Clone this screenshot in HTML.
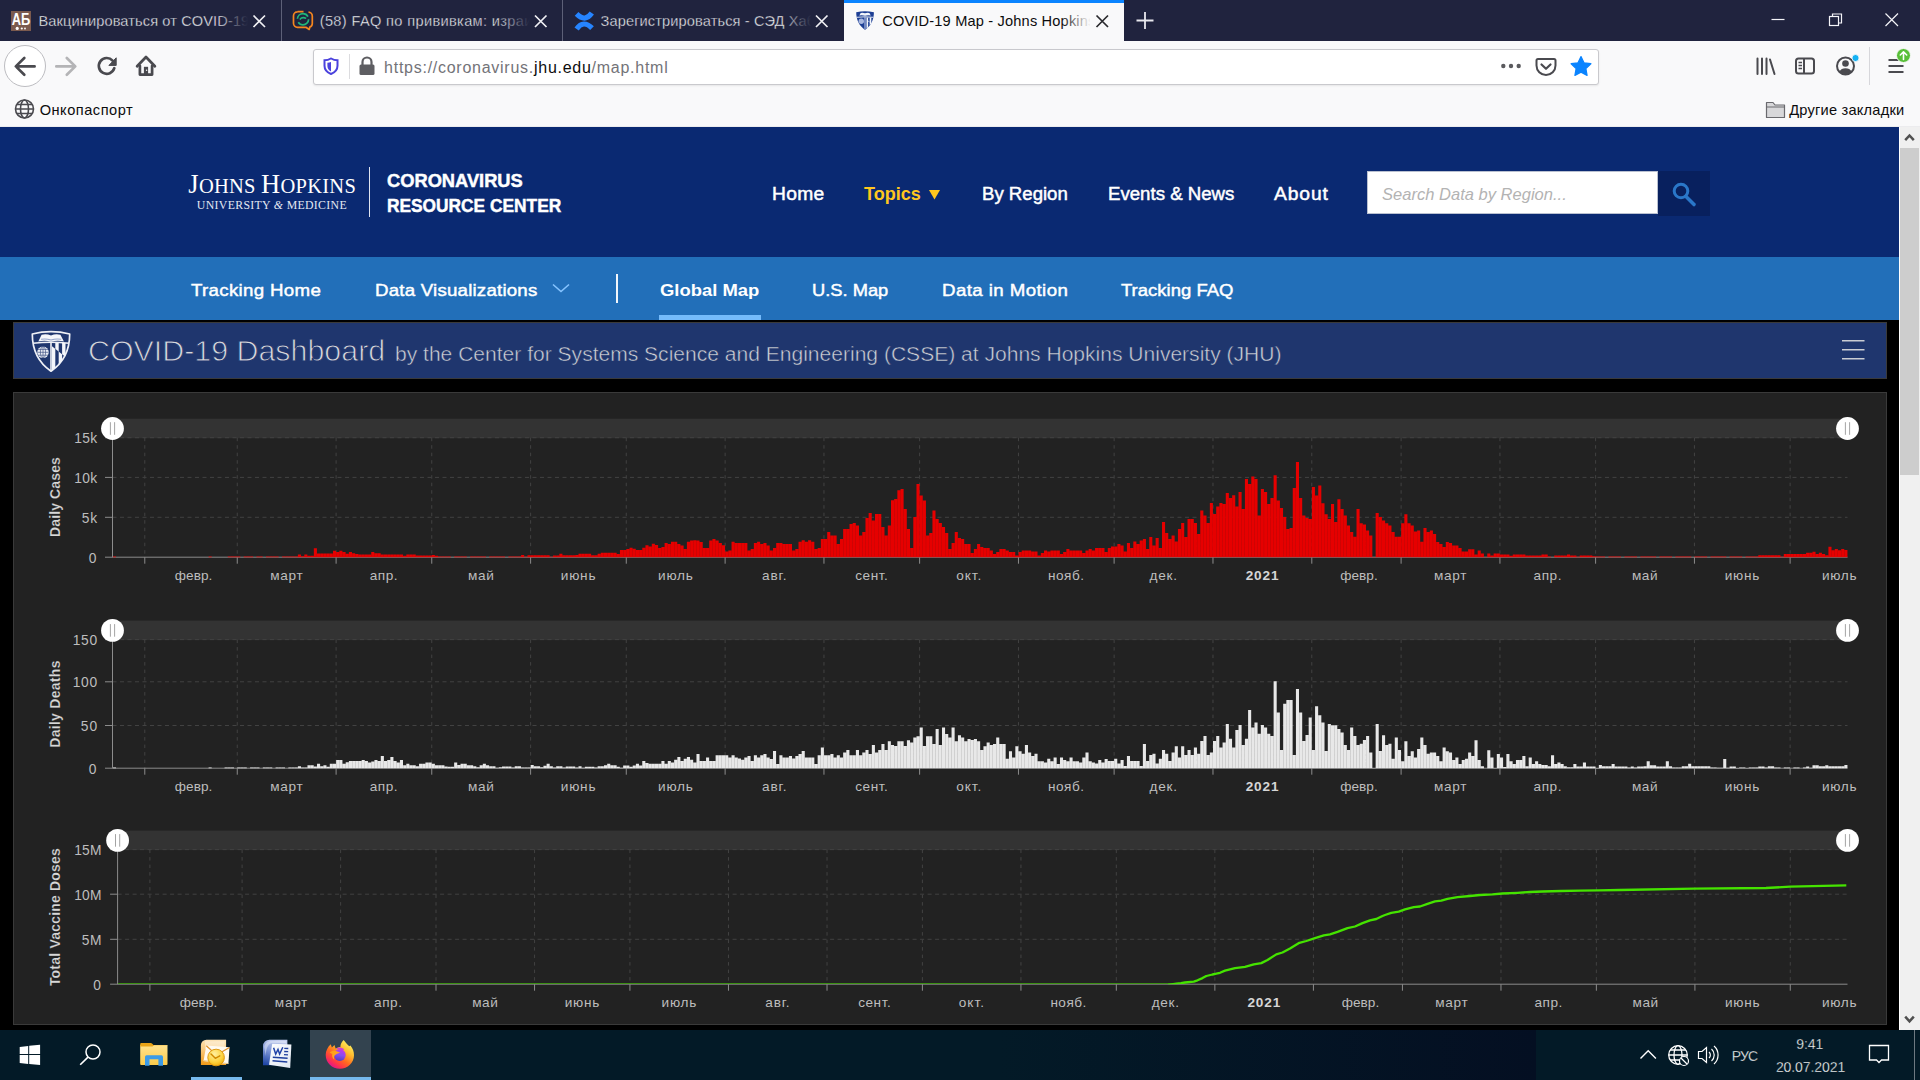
<!DOCTYPE html>
<html lang="ru"><head><meta charset="utf-8"><title>COVID-19 Map - Johns Hopkins Coronavirus Resource Center</title>
<style>
html,body{margin:0;padding:0;background:#000;}
body{width:1920px;height:1080px;overflow:hidden;font-family:"Liberation Sans",sans-serif;}
#root{position:relative;width:1920px;height:1080px;overflow:hidden;background:#000;}
.a{position:absolute;}
.t{position:absolute;white-space:nowrap;}
svg{position:absolute;overflow:visible;}

</style></head>
<body>
<div id="root">

<!-- ===== Browser chrome ===== -->
<div class="a" style="left:0;top:0;width:1920px;height:41px;background:#20233e;"></div>
<!-- tab separators -->
<div class="a" style="left:280.500px;top:0;width:1px;height:41px;background:#5d6078;"></div>
<div class="a" style="left:562px;top:0;width:1px;height:41px;background:#5d6078;"></div>
<!-- active tab -->
<div class="a" style="left:844px;top:0;width:280px;height:41px;background:#f9f9fa;"></div>
<div class="a" style="left:844px;top:0;width:280px;height:3px;background:#0a84ff;"></div>
<!-- tab text fades -->
<div class="a" style="left:218px;top:8px;width:30px;height:26px;z-index:3;background:linear-gradient(90deg,rgba(32,35,62,0),#20233e);"></div>
<div class="a" style="left:500px;top:8px;width:30px;height:26px;z-index:3;background:linear-gradient(90deg,rgba(32,35,62,0),#20233e);"></div>
<div class="a" style="left:782px;top:8px;width:30px;height:26px;z-index:3;background:linear-gradient(90deg,rgba(32,35,62,0),#20233e);"></div>
<div class="a" style="left:1061px;top:8px;width:30px;height:26px;z-index:3;background:linear-gradient(90deg,rgba(249,249,250,0),#f9f9fa);"></div>
<!-- toolbar + bookmarks bg -->
<div class="a" style="left:0;top:41px;width:1920px;height:86px;background:#f9f9fa;"></div>
<div class="a" style="left:0;top:126px;width:1920px;height:1px;background:#ececee;"></div>
<!-- url bar -->
<div class="a" style="left:313px;top:49px;width:1286px;height:35.500px;background:#fff;border:1px solid #c9c9cd;border-radius:3px;box-sizing:border-box;box-shadow:0 1px 2px rgba(0,0,0,.08);"></div>
<div class="a" style="left:349px;top:54px;width:1px;height:25px;background:#dcdcdf;"></div>
<!-- back button -->
<div class="a" style="left:4px;top:45px;width:42px;height:42px;border-radius:50%;background:#fff;border:1px solid #bdbdc1;box-sizing:border-box;"></div>
<svg style="left:0;top:0" width="1920" height="127" viewBox="0 0 1920 127">
  <!-- tab 1 favicon (AB) -->
  <rect x="11" y="11" width="20" height="20" fill="#7b5a4e"/>
  <text x="11.700" y="24.800" font-family="Liberation Sans, sans-serif" font-weight="700" font-size="17" textLength="18.600" lengthAdjust="spacingAndGlyphs" fill="#fff">АБ</text>
  <g fill="#fff"><circle cx="17.200" cy="28.400" r="1.600"/><circle cx="21.800" cy="28.500" r="1.100"/><circle cx="25" cy="28.500" r="0.900"/></g>
  <!-- tab 2 favicon -->
  <g fill="none">
    <path d="M297.500 11.600 h6 M308.500 12.200 a4 4 0 0 1 3.800 4 v7.200 a4 4 0 0 1 -2.500 3.700 l-.600 2.400 -3.300 -2.200 h-8.400 a4 4 0 0 1 -4 -4 v-7.400 a4 4 0 0 1 4 -4" stroke="#f5861f" stroke-width="1.700" stroke-linejoin="round"/>
    <circle cx="303" cy="19.200" r="5.600" stroke="#1fb67a" stroke-width="1.700" stroke-dasharray="14 3.600"/>
    <path d="M299.800 19.400 c1.500 -1.800 4 -2.200 6.400 -1" stroke="#1fb67a" stroke-width="1.500"/>
  </g>
  <!-- tab 3 favicon (confluence) -->
  <g fill="none" stroke="#2684ff" stroke-width="5.200">
    <path d="M576.600 13.900 Q585.200 22.600 591.800 13.100"/>
    <path d="M592 28.200 Q583.400 19.500 576.600 28.900"/>
  </g>
  <!-- active tab favicon (JHU shield) -->
  <g>
    <path d="M856.200 12.300 Q865 10.200 873.900 12.300 C873.900 20 870.700 26 865 30 C859.400 26 856.200 20 856.200 12.300Z" fill="#1d3f94"/>
    <path d="M859.300 15.600 L860.700 12.900 Q863 12.300 865 13.200 Q867 12.300 869.400 12.900 L870.800 15.600 Q868 15 865 15.800 Q862 15 859.300 15.600Z" fill="#f2f5fb"/>
    <path d="M856.800 17.300 Q865 16.300 873.300 17.300" fill="none" stroke="#f2f5fb" stroke-width=".900"/>
    <circle cx="861.300" cy="21.300" r="2.700" fill="#a9b8df"/>
    <path d="M865 17 V29.500" stroke="#c9d3ee" stroke-width="1"/>
    <path d="M866.500 17.600 h1.600 v3 l1.600 1.400 v-4.400 h1.600 v6 l-1.600 1.600 v-2.600 l-1.600 -1.400 v6 l-1.600 1.400z" fill="#f2f5fb"/>
  </g>
  <!-- tab close X's -->
  <g stroke="#f0f0f4" stroke-width="1.700" fill="none" stroke-linecap="butt">
    <path d="M253.500 15.500 l11.500 11.500 M265 15.500 l-11.500 11.500"/>
    <path d="M535 15.500 l11.500 11.500 M546.500 15.500 l-11.500 11.500"/>
    <path d="M816 15.500 l11.500 11.500 M827.500 15.500 l-11.500 11.500"/>
  </g>
  <path d="M1096.500 15.500 l11.500 11.500 M1108 15.500 l-11.500 11.500" stroke="#2a2a2e" stroke-width="1.700" fill="none"/>
  <!-- new tab plus -->
  <path d="M1136.500 20.500 h17 M1145 12 v17" stroke="#e8e8ee" stroke-width="1.800" fill="none"/>
  <!-- window controls -->
  <g stroke="#f4f4f8" stroke-width="1.200" fill="none">
    <path d="M1771.500 19.500 h13"/>
    <rect x="1829.500" y="16.500" width="9" height="9"/>
    <path d="M1832.500 16.500 v-2.500 h9 v9 h-2.500"/>
    <path d="M1885.500 13.500 l12.500 12.500 M1898 13.500 l-12.500 12.500"/>
  </g>
  <!-- back arrow -->
  <path d="M34.600 66.400 h-18.500 M24.300 58 l-8.500 8.400 8.500 8.400" stroke="#4a4a4f" stroke-width="2.700" fill="none" stroke-linecap="round" stroke-linejoin="round"/>
  <!-- forward arrow -->
  <path d="M56.300 66.400 h18.500 M66.800 58 l8.500 8.400 -8.500 8.400" stroke="#b4b4b6" stroke-width="2.700" fill="none" stroke-linecap="round" stroke-linejoin="round"/>
  <!-- reload -->
  <path d="M112.600 60.600 a7.900 7.900 0 1 0 1.700 7.600" stroke="#4a4a4f" stroke-width="2.700" fill="none" stroke-linecap="round"/>
  <path d="M116.200 57.800 v7.600 h-7.300 z" fill="#4a4a4f" stroke="#4a4a4f" stroke-width="1" stroke-linejoin="round"/>
  <!-- home -->
  <g stroke="#4a4a4f" stroke-width="2.700" fill="none" stroke-linejoin="round" stroke-linecap="round">
    <path d="M137.100 66.300 l8.900 -9.300 8.900 9.300"/>
    <path d="M139.900 65.800 v8.800 h12.200 v-8.800"/>
  </g>
  <path d="M143.900 66.800 h4.200 v7.800 h-4.200z" fill="#4a4a4f"/>
  <circle cx="146.600" cy="70.200" r=".700" fill="#f9f9fa"/>
  <!-- tracking shield -->
  <path d="M331 58.500 c2.300 1.300 4.600 1.800 6.500 1.800 v5.500 c0 4 -2.700 6.700 -6.500 8.200 c-3.800 -1.500 -6.500 -4.200 -6.500 -8.200 v-5.500 c1.900 0 4.200 -.5 6.500 -1.800z" fill="none" stroke="#4b42dd" stroke-width="2"/>
  <path d="M331 62 v9.500 c-2.200 -1.100 -3.600 -3 -3.600 -5.500 v-3.200 c1.300 -.1 2.500 -.4 3.600 -.8z" fill="#4b42dd"/>
  <!-- lock -->
  <g>
    <rect x="359.500" y="64.500" width="15" height="10.500" rx="1.500" fill="#5e5e62"/>
    <path d="M362.500 65 v-3 a4.500 4.500 0 0 1 9 0 v3" fill="none" stroke="#5e5e62" stroke-width="2.200"/>
  </g>
  <!-- ... page actions -->
  <g fill="#5a5a5e"><circle cx="1503.300" cy="66" r="2.200"/><circle cx="1511" cy="66" r="2.200"/><circle cx="1518.700" cy="66" r="2.200"/></g>
  <!-- pocket -->
  <path d="M1538 59 h16 a1.500 1.500 0 0 1 1.500 1.500 v5 a9.500 9.500 0 0 1 -19 0 v-5 a1.500 1.500 0 0 1 1.500 -1.500z" fill="none" stroke="#4a4a4f" stroke-width="2"/>
  <path d="M1541.500 64.500 l4.500 4.300 4.500 -4.300" fill="none" stroke="#4a4a4f" stroke-width="2.200" stroke-linecap="round" stroke-linejoin="round"/>
  <!-- star -->
  <path d="M1581 56.500 l3 6.300 6.900 .9 -5 4.800 1.200 6.900 -6.100 -3.300 -6.100 3.300 1.200 -6.900 -5 -4.800 6.900 -.9z" fill="#0a84ff" stroke="#0a84ff" stroke-width="1.200" stroke-linejoin="round"/>
  <!-- library -->
  <g stroke="#4a4a4f" stroke-width="2" fill="none" stroke-linecap="round">
    <path d="M1757.500 58.500 v15.500 M1762 58.500 v15.500 M1766.500 58.500 v15.500 M1770 59.500 l4.500 14.500"/>
  </g>
  <!-- sidebar -->
  <rect x="1796" y="58.500" width="18" height="15" rx="2.500" fill="none" stroke="#4a4a4f" stroke-width="2"/>
  <path d="M1804 58.500 v15" stroke="#4a4a4f" stroke-width="2"/>
  <path d="M1798.500 62.500 h3.500 M1798.500 65.500 h3.500 M1798.500 68.500 h3.500" stroke="#4a4a4f" stroke-width="1.300"/>
  <!-- account -->
  <circle cx="1845.500" cy="66" r="8.500" fill="none" stroke="#4a4a4f" stroke-width="2"/>
  <circle cx="1845.500" cy="63.500" r="3.300" fill="#4a4a4f"/>
  <path d="M1839.500 71.500 c1.500 -4.500 10.500 -4.500 12 0 c-3 3.500 -9 3.500 -12 0z" fill="#4a4a4f"/>
  <circle cx="1855.500" cy="58" r="3.500" fill="#14b1f3" stroke="#f9f9fa" stroke-width=".800"/>
  <!-- separator -->
  <path d="M1869.500 47 v38" stroke="#d7d7db" stroke-width="1"/>
  <!-- hamburger -->
  <path d="M1888.500 60 h15 M1888.500 66 h15 M1888.500 72 h15" stroke="#4a4a4f" stroke-width="2.200" fill="none"/>
  <circle cx="1903.500" cy="55.500" r="7" fill="#58bf38" stroke="#f9f9fa" stroke-width="1"/>
  <path d="M1903.500 59.500 v-7.500 M1900.300 55 l3.200 -3.200 3.200 3.200" stroke="#fff" stroke-width="1.600" fill="none" stroke-linecap="round" stroke-linejoin="round"/>
  <!-- bookmark globe -->
  <g stroke="#4a4a4f" stroke-width="1.600" fill="none">
    <circle cx="24.500" cy="109" r="9"/>
    <ellipse cx="24.500" cy="109" rx="4" ry="9"/>
    <path d="M15.500 109 h18 M17 104.500 h15 M17 113.500 h15"/>
  </g>
  <!-- bookmark folder -->
  <path d="M1766.500 102.500 h6.500 l2 2.500 h9.500 v12.500 h-18z" fill="#d8d8da" stroke="#6a6a6e" stroke-width="1.200" stroke-linejoin="round"/>
  <path d="M1766.500 107 h18" stroke="#6a6a6e" stroke-width="1"/>
</svg>


<!-- ===== Page ===== -->
<div class="a" style="left:0;top:127px;width:1899px;height:130px;background:#0a2972;"></div>
<div class="a" style="left:0;top:257px;width:1899px;height:63px;background:#226fb9;"></div>
<div class="a" style="left:0;top:320px;width:1899px;height:710px;background:#000;"></div>
<!-- logo divider -->
<div class="a" style="left:368.500px;top:167px;width:1.500px;height:50px;background:#dfe4f0;"></div>
<!-- search -->
<div class="a" style="left:1367px;top:171px;width:291px;height:43px;background:#fff;border:1px solid #b9c0d0;box-sizing:border-box;"></div>
<div class="a" style="left:1658px;top:171px;width:52px;height:45px;background:#08205e;"></div>
<svg style="left:1658px;top:171px" width="52" height="45" viewBox="0 0 52 45">
  <circle cx="23" cy="20" r="6.800" fill="none" stroke="#2a77c9" stroke-width="3"/>
  <path d="M28 25.500 l8 8" stroke="#2a77c9" stroke-width="3.600" stroke-linecap="round"/>
</svg>
<!-- topics triangle -->
<svg style="left:928px;top:188px" width="14" height="14" viewBox="0 0 14 14"><path d="M1 2 h11 l-5.500 9.500z" fill="#ffc61e"/></svg>
<!-- subnav chevron, divider, underline -->
<svg style="left:551px;top:282px" width="20" height="12" viewBox="0 0 20 12"><path d="M2 2.500 l8 7 8 -7" fill="none" stroke="#86c4ff" stroke-width="1.600"/></svg>
<div class="a" style="left:616px;top:274px;width:2px;height:29px;background:#f2f6fb;"></div>
<div class="a" style="left:659px;top:315px;width:102px;height:5px;background:#74bbfb;"></div>
<!-- dashboard header -->
<div class="a" style="left:13px;top:322px;width:1874px;height:57px;background:#1f366e;border:1px solid #3a3a3a;box-sizing:border-box;"></div>
<svg style="left:30px;top:329px" width="44" height="46" viewBox="0 0 44 46">
  <defs>
    <clipPath id="shr"><path d="M22 14.100 H38.900 C37.800 24.500 31.500 35 22 41.300Z"/></clipPath>
    <clipPath id="dup"><path d="M22 10 H42 V33 L22 17.200Z"/></clipPath>
    <clipPath id="ddn"><path d="M22 17.200 L42 33 V44 H22Z"/></clipPath>
  </defs>
  <path d="M2.300 5 Q21 0.300 39.700 5 C39.700 20.500 33 34 21 42.200 C9 34 2.300 20.500 2.300 5Z" fill="#1f366e" stroke="#eef0f6" stroke-width="1.700" stroke-linejoin="round"/>
  <path d="M3 14.200 Q21 12.200 39 14.200" fill="none" stroke="#eef0f6" stroke-width="1.500"/>
  <path d="M8.300 12.400 L11.600 5.700 Q16.500 4.500 21 6.400 Q25.500 4.500 30.400 5.700 L33.900 12.400 Q27 11 21 12.700 Q15 11 8.300 12.400Z" fill="#f4f6fa"/>
  <path d="M11 10.300 Q16 9.300 21 11 Q26 9.300 31.200 10.300" fill="none" stroke="#93a2c8" stroke-width="1.100"/>
  <circle cx="13" cy="23.300" r="5.800" fill="#e9ecf4"/>
  <g fill="none" stroke="#1f366e" stroke-width=".550"><ellipse cx="13" cy="23.300" rx="2.600" ry="5.800"/><path d="M13 17.500v11.600M7.200 23.300h11.600M8 20.400h10M8 26.200h10"/></g>
  <g clip-path="url(#shr)">
    <g clip-path="url(#dup)" fill="#f4f6fa"><rect x="25.300" y="12" width="3.400" height="32"/><rect x="32.100" y="12" width="3.400" height="32"/></g>
    <g clip-path="url(#ddn)" fill="#f4f6fa"><rect x="21.900" y="12" width="3.400" height="32"/><rect x="28.700" y="12" width="3.400" height="32"/><rect x="35.500" y="12" width="3.400" height="32"/></g>
  </g>
  <path d="M21 14 V41.600" stroke="#eef0f6" stroke-width="1.600"/>
</svg>
<svg style="left:1840px;top:336px" width="28" height="28" viewBox="0 0 28 28"><path d="M2 4.800 h22.500 M2 13.800 h22.500 M2 22.800 h22.500" stroke="#c9ccd3" stroke-width="1.500"/></svg>
<!-- chart panel -->
<div class="a" style="left:13px;top:392px;width:1874px;height:633px;background:#222;border:1px solid #3a3a3a;box-sizing:border-box;"></div>
<!-- page scrollbar -->
<div class="a" style="left:1899px;top:127px;width:21px;height:903px;background:#f0f0f0;"></div>
<div class="a" style="left:1899px;top:127px;width:1px;height:903px;background:#fff;"></div>
<div class="a" style="left:1900px;top:148px;width:19px;height:327px;background:#cdcdcd;"></div>
<svg style="left:1899px;top:127px" width="21" height="903" viewBox="0 0 21 903">
  <path d="M6.200 13.200 l4.300 -4.700 4.300 4.700" fill="none" stroke="#505050" stroke-width="2.500"/>
  <path d="M6.200 889.600 l4.300 4.700 4.300 -4.700" fill="none" stroke="#505050" stroke-width="2.500"/>
</svg>

<!-- ===== Charts ===== -->
<svg style="left:0;top:0" width="1920" height="1080" viewBox="0 0 1920 1080">
<rect x="112.5" y="418.7" width="1735" height="19.5" fill="#333"/>
<path d="M112.5 437.7H1847.5M112.5 477.4H1847.5M112.5 517.3H1847.5" stroke="#424242" stroke-width="1" stroke-dasharray="4 3.5" fill="none"/>
<path d="M144.79 437.7V557.2M237.26 437.7V557.2M336.1 437.7V557.2M431.76 437.7V557.2M530.61 437.7V557.2M626.27 437.7V557.2M725.11 437.7V557.2M823.96 437.7V557.2M919.62 437.7V557.2M1018.46 437.7V557.2M1114.12 437.7V557.2M1212.97 437.7V557.2M1311.81 437.7V557.2M1401.1 437.7V557.2M1499.94 437.7V557.2M1595.6 437.7V557.2M1694.45 437.7V557.2M1790.11 437.7V557.2" stroke="#424242" stroke-width="1" stroke-dasharray="3.5 4" fill="none"/>
<path d="M112.5 437.7V557.2M105 557.2H1847.5M105 437.7H112.5M105 477.4H112.5M105 517.3H112.5M144.79 557.2v6.5M237.26 557.2v6.5M336.1 557.2v6.5M431.76 557.2v6.5M530.61 557.2v6.5M626.27 557.2v6.5M725.11 557.2v6.5M823.96 557.2v6.5M919.62 557.2v6.5M1018.46 557.2v6.5M1114.12 557.2v6.5M1212.97 557.2v6.5M1311.81 557.2v6.5M1401.1 557.2v6.5M1499.94 557.2v6.5M1595.6 557.2v6.5M1694.45 557.2v6.5M1790.11 557.2v6.5" stroke="#8c8c8c" stroke-width="1" fill="none"/>
<path d="M112.96 557.2v-0.8h3.08v0.8zM208.61 557.2v-0.6h3.08v0.6zM227.75 557.2v-0.6h3.08v0.6zM230.93 557.2v-0.6h3.08v0.6zM234.12 557.2v-0.6h3.08v0.6zM237.31 557.2v-0.6h3.08v0.6zM243.69 557.2v-0.6h3.08v0.6zM246.88 557.2v-0.6h3.08v0.6zM250.07 557.2v-0.6h3.08v0.6zM256.44 557.2v-0.6h3.08v0.6zM259.63 557.2v-0.6h3.08v0.6zM266.01 557.2v-0.6h3.08v0.6zM269.2 557.2v-0.6h3.08v0.6zM272.39 557.2v-0.6h3.08v0.6zM275.57 557.2v-0.6h3.08v0.6zM281.95 557.2v-0.6h3.08v0.6zM285.14 557.2v-0.6h3.08v0.6zM288.33 557.2v-0.6h3.08v0.6zM291.52 557.2v-0.6h3.08v0.6zM294.71 557.2v-0.6h3.08v0.6zM297.89 557.2v-2.8h3.08v2.8zM301.08 557.2v-1h3.08v1zM304.27 557.2v-2.8h3.08v2.8zM307.46 557.2v-1.5h3.08v1.5zM310.65 557.2v-1.5h3.08v1.5zM313.84 557.2v-9h3.08v9zM317.03 557.2v-3.7h3.08v3.7zM320.21 557.2v-3.7h3.08v3.7zM323.4 557.2v-3.7h3.08v3.7zM326.59 557.2v-3.7h3.08v3.7zM329.78 557.2v-3.7h3.08v3.7zM332.97 557.2v-6.5h3.08v6.5zM336.16 557.2v-5.2h3.08v5.2zM339.35 557.2v-6.5h3.08v6.5zM342.54 557.2v-5.2h3.08v5.2zM345.72 557.2v-3.5h3.08v3.5zM348.91 557.2v-5.2h3.08v5.2zM352.1 557.2v-3.9h3.08v3.9zM355.29 557.2v-3.3h3.08v3.3zM358.48 557.2v-2.8h3.08v2.8zM361.67 557.2v-2.8h3.08v2.8zM364.86 557.2v-2.8h3.08v2.8zM368.04 557.2v-2.8h3.08v2.8zM371.23 557.2v-5.2h3.08v5.2zM374.42 557.2v-3.9h3.08v3.9zM377.61 557.2v-3.9h3.08v3.9zM380.8 557.2v-2.8h3.08v2.8zM383.99 557.2v-2.8h3.08v2.8zM387.18 557.2v-2.8h3.08v2.8zM390.36 557.2v-2.8h3.08v2.8zM393.55 557.2v-2.8h3.08v2.8zM396.74 557.2v-2.8h3.08v2.8zM399.93 557.2v-2.8h3.08v2.8zM403.12 557.2v-1.5h3.08v1.5zM406.31 557.2v-2.8h3.08v2.8zM409.5 557.2v-2.8h3.08v2.8zM412.68 557.2v-2.8h3.08v2.8zM415.87 557.2v-1.8h3.08v1.8zM419.06 557.2v-1.8h3.08v1.8zM422.25 557.2v-1.8h3.08v1.8zM425.44 557.2v-1.8h3.08v1.8zM428.63 557.2v-1.8h3.08v1.8zM431.82 557.2v-2.1h3.08v2.1zM435 557.2v-1.5h3.08v1.5zM438.19 557.2v-0.6h3.08v0.6zM441.38 557.2v-0.6h3.08v0.6zM444.57 557.2v-0.6h3.08v0.6zM447.76 557.2v-0.6h3.08v0.6zM454.14 557.2v-0.6h3.08v0.6zM457.32 557.2v-0.6h3.08v0.6zM460.51 557.2v-0.6h3.08v0.6zM463.7 557.2v-0.6h3.08v0.6zM470.08 557.2v-0.6h3.08v0.6zM473.27 557.2v-0.6h3.08v0.6zM476.46 557.2v-0.6h3.08v0.6zM479.65 557.2v-0.6h3.08v0.6zM482.83 557.2v-0.6h3.08v0.6zM489.21 557.2v-0.6h3.08v0.6zM492.4 557.2v-0.6h3.08v0.6zM495.59 557.2v-0.6h3.08v0.6zM498.78 557.2v-0.6h3.08v0.6zM501.97 557.2v-0.6h3.08v0.6zM508.34 557.2v-0.6h3.08v0.6zM511.53 557.2v-0.6h3.08v0.6zM514.72 557.2v-0.6h3.08v0.6zM517.91 557.2v-0.6h3.08v0.6zM521.1 557.2v-2.1h3.08v2.1zM524.29 557.2v-0.5h3.08v0.5zM527.47 557.2v-1.9h3.08v1.9zM530.66 557.2v-1.9h3.08v1.9zM533.85 557.2v-1.9h3.08v1.9zM537.04 557.2v-1.9h3.08v1.9zM540.23 557.2v-1.9h3.08v1.9zM543.42 557.2v-1.9h3.08v1.9zM546.61 557.2v-1.9h3.08v1.9zM549.79 557.2v-0.5h3.08v0.5zM552.98 557.2v-1.7h3.08v1.7zM556.17 557.2v-1.7h3.08v1.7zM559.36 557.2v-3.4h3.08v3.4zM562.55 557.2v-1.9h3.08v1.9zM565.74 557.2v-1.9h3.08v1.9zM568.93 557.2v-1.9h3.08v1.9zM572.11 557.2v-1.9h3.08v1.9zM575.3 557.2v-2.2h3.08v2.2zM578.49 557.2v-3.4h3.08v3.4zM581.68 557.2v-3.4h3.08v3.4zM584.87 557.2v-3.4h3.08v3.4zM588.06 557.2v-3.4h3.08v3.4zM591.25 557.2v-1.9h3.08v1.9zM594.43 557.2v-1.9h3.08v1.9zM597.62 557.2v-3.4h3.08v3.4zM600.81 557.2v-4.4h3.08v4.4zM604 557.2v-4.4h3.08v4.4zM607.19 557.2v-4.4h3.08v4.4zM610.38 557.2v-4.4h3.08v4.4zM613.57 557.2v-4.4h3.08v4.4zM616.76 557.2v-3.1h3.08v3.1zM619.94 557.2v-7.1h3.08v7.1zM623.13 557.2v-7.1h3.08v7.1zM626.32 557.2v-8.1h3.08v8.1zM629.51 557.2v-9.4h3.08v9.4zM632.7 557.2v-8.4h3.08v8.4zM635.89 557.2v-7.1h3.08v7.1zM639.08 557.2v-7.1h3.08v7.1zM642.26 557.2v-9.4h3.08v9.4zM645.45 557.2v-11.9h3.08v11.9zM648.64 557.2v-10.6h3.08v10.6zM651.83 557.2v-13.4h3.08v13.4zM655.02 557.2v-12.1h3.08v12.1zM658.21 557.2v-9.3h3.08v9.3zM661.4 557.2v-10.3h3.08v10.3zM664.58 557.2v-14.2h3.08v14.2zM667.77 557.2v-13.3h3.08v13.3zM670.96 557.2v-15.5h3.08v15.5zM674.15 557.2v-15.5h3.08v15.5zM677.34 557.2v-13.2h3.08v13.2zM680.53 557.2v-11.8h3.08v11.8zM683.72 557.2v-8.3h3.08v8.3zM686.9 557.2v-15.5h3.08v15.5zM690.09 557.2v-16.8h3.08v16.8zM693.28 557.2v-17h3.08v17zM696.47 557.2v-16.8h3.08v16.8zM699.66 557.2v-15.3h3.08v15.3zM702.85 557.2v-9.3h3.08v9.3zM706.04 557.2v-9.3h3.08v9.3zM709.22 557.2v-16.8h3.08v16.8zM712.41 557.2v-18.1h3.08v18.1zM715.6 557.2v-16.8h3.08v16.8zM718.79 557.2v-14.3h3.08v14.3zM721.98 557.2v-12h3.08v12zM725.17 557.2v-5.6h3.08v5.6zM728.36 557.2v-6.8h3.08v6.8zM731.54 557.2v-15.5h3.08v15.5zM734.73 557.2v-14.3h3.08v14.3zM737.92 557.2v-14.3h3.08v14.3zM741.11 557.2v-14.3h3.08v14.3zM744.3 557.2v-14.3h3.08v14.3zM747.49 557.2v-6.8h3.08v6.8zM750.68 557.2v-8.3h3.08v8.3zM753.86 557.2v-14.2h3.08v14.2zM757.05 557.2v-15.5h3.08v15.5zM760.24 557.2v-13.3h3.08v13.3zM763.43 557.2v-14.2h3.08v14.2zM766.62 557.2v-11.7h3.08v11.7zM769.81 557.2v-6.8h3.08v6.8zM773 557.2v-9.2h3.08v9.2zM776.19 557.2v-14.2h3.08v14.2zM779.37 557.2v-14.2h3.08v14.2zM782.56 557.2v-13.3h3.08v13.3zM785.75 557.2v-13.3h3.08v13.3zM788.94 557.2v-13.3h3.08v13.3zM792.13 557.2v-6.8h3.08v6.8zM795.32 557.2v-8.1h3.08v8.1zM798.51 557.2v-15.5h3.08v15.5zM801.69 557.2v-17h3.08v17zM804.88 557.2v-15.5h3.08v15.5zM808.07 557.2v-17h3.08v17zM811.26 557.2v-15.5h3.08v15.5zM814.45 557.2v-8.3h3.08v8.3zM817.64 557.2v-9.2h3.08v9.2zM820.83 557.2v-18.1h3.08v18.1zM824.01 557.2v-18.1h3.08v18.1zM827.2 557.2v-25.3h3.08v25.3zM830.39 557.2v-21.8h3.08v21.8zM833.58 557.2v-21.8h3.08v21.8zM836.77 557.2v-13.1h3.08v13.1zM839.96 557.2v-18.1h3.08v18.1zM843.15 557.2v-28.1h3.08v28.1zM846.33 557.2v-28.1h3.08v28.1zM849.52 557.2v-33.1h3.08v33.1zM852.71 557.2v-34.3h3.08v34.3zM855.9 557.2v-31.8h3.08v31.8zM859.09 557.2v-21.8h3.08v21.8zM862.28 557.2v-25.3h3.08v25.3zM865.47 557.2v-39.3h3.08v39.3zM868.65 557.2v-44.2h3.08v44.2zM871.84 557.2v-36.8h3.08v36.8zM875.03 557.2v-43.1h3.08v43.1zM878.22 557.2v-43.1h3.08v43.1zM881.41 557.2v-30.3h3.08v30.3zM884.6 557.2v-21.8h3.08v21.8zM887.79 557.2v-31.8h3.08v31.8zM890.97 557.2v-57h3.08v57zM894.16 557.2v-58.1h3.08v58.1zM897.35 557.2v-67h3.08v67zM900.54 557.2v-68.1h3.08v68.1zM903.73 557.2v-48.1h3.08v48.1zM906.92 557.2v-28.1h3.08v28.1zM910.11 557.2v-9.3h3.08v9.3zM913.3 557.2v-40.3h3.08v40.3zM916.48 557.2v-73.1h3.08v73.1zM919.67 557.2v-61.8h3.08v61.8zM922.86 557.2v-56.8h3.08v56.8zM926.05 557.2v-21.8h3.08v21.8zM929.24 557.2v-24.3h3.08v24.3zM932.43 557.2v-46.8h3.08v46.8zM935.62 557.2v-38.1h3.08v38.1zM938.8 557.2v-34.3h3.08v34.3zM941.99 557.2v-30.3h3.08v30.3zM945.18 557.2v-24.3h3.08v24.3zM948.37 557.2v-8.3h3.08v8.3zM951.56 557.2v-14.3h3.08v14.3zM954.75 557.2v-25.3h3.08v25.3zM957.94 557.2v-19.3h3.08v19.3zM961.12 557.2v-18.1h3.08v18.1zM964.31 557.2v-13.3h3.08v13.3zM967.5 557.2v-13.3h3.08v13.3zM970.69 557.2v-4.3h3.08v4.3zM973.88 557.2v-8.3h3.08v8.3zM977.07 557.2v-13.3h3.08v13.3zM980.26 557.2v-10.3h3.08v10.3zM983.44 557.2v-9.3h3.08v9.3zM986.63 557.2v-9.3h3.08v9.3zM989.82 557.2v-6.8h3.08v6.8zM993.01 557.2v-3.3h3.08v3.3zM996.2 557.2v-5.3h3.08v5.3zM999.39 557.2v-8.3h3.08v8.3zM1002.58 557.2v-8.3h3.08v8.3zM1005.76 557.2v-6.8h3.08v6.8zM1008.95 557.2v-5.3h3.08v5.3zM1012.14 557.2v-5.3h3.08v5.3zM1015.33 557.2v-1.8h3.08v1.8zM1018.52 557.2v-5.3h3.08v5.3zM1021.71 557.2v-6.8h3.08v6.8zM1024.9 557.2v-6.8h3.08v6.8zM1028.08 557.2v-6.8h3.08v6.8zM1031.27 557.2v-5.6h3.08v5.6zM1034.46 557.2v-5.6h3.08v5.6zM1037.65 557.2v-1.8h3.08v1.8zM1040.84 557.2v-4.3h3.08v4.3zM1044.03 557.2v-6.8h3.08v6.8zM1047.22 557.2v-5.6h3.08v5.6zM1050.41 557.2v-6.8h3.08v6.8zM1053.59 557.2v-6.8h3.08v6.8zM1056.78 557.2v-6.8h3.08v6.8zM1059.97 557.2v-3.3h3.08v3.3zM1063.16 557.2v-5.3h3.08v5.3zM1066.35 557.2v-8.3h3.08v8.3zM1069.54 557.2v-6.8h3.08v6.8zM1072.73 557.2v-6.8h3.08v6.8zM1075.91 557.2v-6.8h3.08v6.8zM1079.1 557.2v-6.8h3.08v6.8zM1082.29 557.2v-4.3h3.08v4.3zM1085.48 557.2v-6.8h3.08v6.8zM1088.67 557.2v-8.3h3.08v8.3zM1091.86 557.2v-6.8h3.08v6.8zM1095.05 557.2v-9.3h3.08v9.3zM1098.23 557.2v-9.3h3.08v9.3zM1101.42 557.2v-9.3h3.08v9.3zM1104.61 557.2v-5.3h3.08v5.3zM1107.8 557.2v-9.3h3.08v9.3zM1110.99 557.2v-10.6h3.08v10.6zM1114.18 557.2v-10.6h3.08v10.6zM1117.37 557.2v-13.3h3.08v13.3zM1120.55 557.2v-11.8h3.08v11.8zM1123.74 557.2v-5.6h3.08v5.6zM1126.93 557.2v-14.3h3.08v14.3zM1130.12 557.2v-9.3h3.08v9.3zM1133.31 557.2v-15.6h3.08v15.6zM1136.5 557.2v-13.3h3.08v13.3zM1139.69 557.2v-16.8h3.08v16.8zM1142.87 557.2v-18.1h3.08v18.1zM1146.06 557.2v-8.3h3.08v8.3zM1149.25 557.2v-20.3h3.08v20.3zM1152.44 557.2v-11.8h3.08v11.8zM1155.63 557.2v-19.3h3.08v19.3zM1158.82 557.2v-9.3h3.08v9.3zM1162.01 557.2v-35.3h3.08v35.3zM1165.19 557.2v-24.3h3.08v24.3zM1168.38 557.2v-18.1h3.08v18.1zM1171.57 557.2v-21.8h3.08v21.8zM1174.76 557.2v-15.6h3.08v15.6zM1177.95 557.2v-28.1h3.08v28.1zM1181.14 557.2v-34.3h3.08v34.3zM1184.33 557.2v-20.3h3.08v20.3zM1187.51 557.2v-38.1h3.08v38.1zM1190.7 557.2v-38.1h3.08v38.1zM1193.89 557.2v-34.3h3.08v34.3zM1197.08 557.2v-23.1h3.08v23.1zM1200.27 557.2v-46.8h3.08v46.8zM1203.46 557.2v-41.8h3.08v41.8zM1206.65 557.2v-34.3h3.08v34.3zM1209.84 557.2v-54.2h3.08v54.2zM1213.02 557.2v-43.3h3.08v43.3zM1216.21 557.2v-50.6h3.08v50.6zM1219.4 557.2v-54.2h3.08v54.2zM1222.59 557.2v-53.1h3.08v53.1zM1225.78 557.2v-64.3h3.08v64.3zM1228.97 557.2v-59.3h3.08v59.3zM1232.16 557.2v-62h3.08v62zM1235.34 557.2v-50.6h3.08v50.6zM1238.53 557.2v-65.3h3.08v65.3zM1241.72 557.2v-48.3h3.08v48.3zM1244.91 557.2v-78.3h3.08v78.3zM1248.1 557.2v-73.3h3.08v73.3zM1251.29 557.2v-80.6h3.08v80.6zM1254.48 557.2v-78.3h3.08v78.3zM1257.66 557.2v-41.8h3.08v41.8zM1260.85 557.2v-68.3h3.08v68.3zM1264.04 557.2v-65.3h3.08v65.3zM1267.23 557.2v-53.1h3.08v53.1zM1270.42 557.2v-59.3h3.08v59.3zM1273.61 557.2v-82h3.08v82zM1276.8 557.2v-56.8h3.08v56.8zM1279.98 557.2v-49.3h3.08v49.3zM1283.17 557.2v-40.3h3.08v40.3zM1286.36 557.2v-28.3h3.08v28.3zM1289.55 557.2v-29.3h3.08v29.3zM1292.74 557.2v-69.2h3.08v69.2zM1295.93 557.2v-95.2h3.08v95.2zM1299.12 557.2v-59.1h3.08v59.1zM1302.3 557.2v-41.8h3.08v41.8zM1305.49 557.2v-39.2h3.08v39.2zM1308.68 557.2v-38.1h3.08v38.1zM1311.87 557.2v-70.3h3.08v70.3zM1315.06 557.2v-61.7h3.08v61.7zM1318.25 557.2v-71.8h3.08v71.8zM1321.44 557.2v-54h3.08v54zM1324.62 557.2v-42.9h3.08v42.9zM1327.81 557.2v-38.1h3.08v38.1zM1331 557.2v-53.1h3.08v53.1zM1334.19 557.2v-35.2h3.08v35.2zM1337.38 557.2v-57.9h3.08v57.9zM1340.57 557.2v-48.1h3.08v48.1zM1343.76 557.2v-41.8h3.08v41.8zM1346.95 557.2v-31.7h3.08v31.7zM1350.13 557.2v-25.1h3.08v25.1zM1353.32 557.2v-20.4h3.08v20.4zM1356.51 557.2v-48.1h3.08v48.1zM1359.7 557.2v-34h3.08v34zM1362.89 557.2v-32.8h3.08v32.8zM1366.08 557.2v-26.8h3.08v26.8zM1369.27 557.2v-21.8h3.08v21.8zM1372.45 557.2v-0.3h3.08v0.3zM1375.64 557.2v-44.1h3.08v44.1zM1378.83 557.2v-40.1h3.08v40.1zM1382.02 557.2v-36.6h3.08v36.6zM1385.21 557.2v-34h3.08v34zM1388.4 557.2v-31.7h3.08v31.7zM1391.59 557.2v-25.1h3.08v25.1zM1394.77 557.2v-20.4h3.08v20.4zM1397.96 557.2v-20.4h3.08v20.4zM1401.15 557.2v-34h3.08v34zM1404.34 557.2v-42.9h3.08v42.9zM1407.53 557.2v-34h3.08v34zM1410.72 557.2v-31.7h3.08v31.7zM1413.91 557.2v-25.6h3.08v25.6zM1417.09 557.2v-26.8h3.08v26.8zM1420.28 557.2v-15.5h3.08v15.5zM1423.47 557.2v-29.1h3.08v29.1zM1426.66 557.2v-25.1h3.08v25.1zM1429.85 557.2v-26.8h3.08v26.8zM1433.04 557.2v-23.1h3.08v23.1zM1436.23 557.2v-15.3h3.08v15.3zM1439.41 557.2v-13.1h3.08v13.1zM1442.6 557.2v-10.3h3.08v10.3zM1445.79 557.2v-15.3h3.08v15.3zM1448.98 557.2v-14.1h3.08v14.1zM1452.17 557.2v-11.8h3.08v11.8zM1455.36 557.2v-11.8h3.08v11.8zM1458.55 557.2v-9.2h3.08v9.2zM1461.73 557.2v-5.6h3.08v5.6zM1464.92 557.2v-5.6h3.08v5.6zM1468.11 557.2v-8h3.08v8zM1471.3 557.2v-8h3.08v8zM1474.49 557.2v-2.7h3.08v2.7zM1477.68 557.2v-6.7h3.08v6.7zM1480.87 557.2v-3.7h3.08v3.7zM1484.06 557.2v-0.3h3.08v0.3zM1487.24 557.2v-3.7h3.08v3.7zM1490.43 557.2v-1.7h3.08v1.7zM1493.62 557.2v-3.7h3.08v3.7zM1496.81 557.2v-3.7h3.08v3.7zM1500 557.2v-2.7h3.08v2.7zM1503.19 557.2v-2.7h3.08v2.7zM1506.38 557.2v-2.7h3.08v2.7zM1509.56 557.2v-1.4h3.08v1.4zM1512.75 557.2v-2.7h3.08v2.7zM1515.94 557.2v-2.7h3.08v2.7zM1519.13 557.2v-2.7h3.08v2.7zM1522.32 557.2v-2.7h3.08v2.7zM1525.51 557.2v-1.7h3.08v1.7zM1528.7 557.2v-1.7h3.08v1.7zM1531.88 557.2v-1.7h3.08v1.7zM1535.07 557.2v-1.7h3.08v1.7zM1538.26 557.2v-1.7h3.08v1.7zM1541.45 557.2v-2.7h3.08v2.7zM1544.64 557.2v-2.7h3.08v2.7zM1547.83 557.2v-0.7h3.08v0.7zM1554.2 557.2v-1.7h3.08v1.7zM1557.39 557.2v-1.7h3.08v1.7zM1560.58 557.2v-1.7h3.08v1.7zM1563.77 557.2v-1.7h3.08v1.7zM1566.96 557.2v-2.7h3.08v2.7zM1570.15 557.2v-1.7h3.08v1.7zM1573.34 557.2v-1.7h3.08v1.7zM1576.52 557.2v-0.4h3.08v0.4zM1579.71 557.2v-1.7h3.08v1.7zM1582.9 557.2v-1.7h3.08v1.7zM1586.09 557.2v-1.7h3.08v1.7zM1589.28 557.2v-1.7h3.08v1.7zM1592.47 557.2v-1h3.08v1zM1595.66 557.2v-0.6h3.08v0.6zM1598.84 557.2v-0.6h3.08v0.6zM1602.03 557.2v-0.6h3.08v0.6zM1608.41 557.2v-0.6h3.08v0.6zM1611.6 557.2v-0.6h3.08v0.6zM1614.79 557.2v-0.6h3.08v0.6zM1617.98 557.2v-0.6h3.08v0.6zM1624.35 557.2v-0.6h3.08v0.6zM1627.54 557.2v-0.6h3.08v0.6zM1630.73 557.2v-0.6h3.08v0.6zM1633.92 557.2v-0.6h3.08v0.6zM1640.3 557.2v-0.6h3.08v0.6zM1643.49 557.2v-0.6h3.08v0.6zM1646.67 557.2v-0.6h3.08v0.6zM1649.86 557.2v-0.6h3.08v0.6zM1653.05 557.2v-0.6h3.08v0.6zM1659.43 557.2v-0.6h3.08v0.6zM1662.62 557.2v-0.6h3.08v0.6zM1665.81 557.2v-0.6h3.08v0.6zM1668.99 557.2v-0.6h3.08v0.6zM1675.37 557.2v-0.6h3.08v0.6zM1678.56 557.2v-0.6h3.08v0.6zM1681.75 557.2v-0.6h3.08v0.6zM1684.94 557.2v-0.6h3.08v0.6zM1688.13 557.2v-0.6h3.08v0.6zM1694.5 557.2v-0.6h3.08v0.6zM1697.69 557.2v-0.6h3.08v0.6zM1700.88 557.2v-0.6h3.08v0.6zM1704.07 557.2v-0.6h3.08v0.6zM1710.45 557.2v-0.6h3.08v0.6zM1713.63 557.2v-0.6h3.08v0.6zM1716.82 557.2v-0.6h3.08v0.6zM1720.01 557.2v-0.6h3.08v0.6zM1723.2 557.2v-0.6h3.08v0.6zM1729.58 557.2v-0.6h3.08v0.6zM1732.77 557.2v-0.6h3.08v0.6zM1735.95 557.2v-0.6h3.08v0.6zM1739.14 557.2v-0.6h3.08v0.6zM1745.52 557.2v-0.6h3.08v0.6zM1748.71 557.2v-0.6h3.08v0.6zM1751.9 557.2v-0.6h3.08v0.6zM1755.09 557.2v-0.6h3.08v0.6zM1758.27 557.2v-1.9h3.08v1.9zM1761.46 557.2v-1.9h3.08v1.9zM1764.65 557.2v-1.9h3.08v1.9zM1767.84 557.2v-1.9h3.08v1.9zM1771.03 557.2v-1.9h3.08v1.9zM1774.22 557.2v-1.9h3.08v1.9zM1777.41 557.2v-1.9h3.08v1.9zM1780.6 557.2v-0.5h3.08v0.5zM1783.78 557.2v-3.2h3.08v3.2zM1786.97 557.2v-3.2h3.08v3.2zM1790.16 557.2v-3.2h3.08v3.2zM1793.35 557.2v-3.2h3.08v3.2zM1796.54 557.2v-3.2h3.08v3.2zM1799.73 557.2v-3.2h3.08v3.2zM1802.92 557.2v-3.2h3.08v3.2zM1806.1 557.2v-4.4h3.08v4.4zM1809.29 557.2v-4.4h3.08v4.4zM1812.48 557.2v-5.5h3.08v5.5zM1815.67 557.2v-3.2h3.08v3.2zM1818.86 557.2v-4.4h3.08v4.4zM1822.05 557.2v-3.2h3.08v3.2zM1825.24 557.2v-1.9h3.08v1.9zM1828.42 557.2v-10.5h3.08v10.5zM1831.61 557.2v-6.9h3.08v6.9zM1834.8 557.2v-8.3h3.08v8.3zM1837.99 557.2v-6.9h3.08v6.9zM1841.18 557.2v-8.3h3.08v8.3zM1844.37 557.2v-7.2h3.08v7.2z" fill="#e60000"/>
<circle cx="112.5" cy="428.5" r="11.4" fill="#fff"/><path d="M110.4 422.2v12.6M114.6 422.2v12.6" stroke="#9a9a9a" stroke-width="0.9" fill="none"/>
<circle cx="1847.5" cy="428.5" r="11.4" fill="#fff"/><path d="M1845.4 422.2v12.6M1849.6 422.2v12.6" stroke="#9a9a9a" stroke-width="0.9" fill="none"/>
<rect x="112.5" y="620.6" width="1735" height="19.5" fill="#333"/>
<path d="M112.5 639.6H1847.5M112.5 681.8H1847.5M112.5 725.5H1847.5" stroke="#424242" stroke-width="1" stroke-dasharray="4 3.5" fill="none"/>
<path d="M144.79 639.6V768.2M237.26 639.6V768.2M336.1 639.6V768.2M431.76 639.6V768.2M530.61 639.6V768.2M626.27 639.6V768.2M725.11 639.6V768.2M823.96 639.6V768.2M919.62 639.6V768.2M1018.46 639.6V768.2M1114.12 639.6V768.2M1212.97 639.6V768.2M1311.81 639.6V768.2M1401.1 639.6V768.2M1499.94 639.6V768.2M1595.6 639.6V768.2M1694.45 639.6V768.2M1790.11 639.6V768.2" stroke="#424242" stroke-width="1" stroke-dasharray="3.5 4" fill="none"/>
<path d="M112.5 639.6V768.2M105 768.2H1847.5M105 639.6H112.5M105 681.8H112.5M105 725.5H112.5M144.79 768.2v6.5M237.26 768.2v6.5M336.1 768.2v6.5M431.76 768.2v6.5M530.61 768.2v6.5M626.27 768.2v6.5M725.11 768.2v6.5M823.96 768.2v6.5M919.62 768.2v6.5M1018.46 768.2v6.5M1114.12 768.2v6.5M1212.97 768.2v6.5M1311.81 768.2v6.5M1401.1 768.2v6.5M1499.94 768.2v6.5M1595.6 768.2v6.5M1694.45 768.2v6.5M1790.11 768.2v6.5" stroke="#8c8c8c" stroke-width="1" fill="none"/>
<path d="M112.96 768.2v-0.8h3.08v0.8zM208.61 768.2v-0.8h3.08v0.8zM224.56 768.2v-0.8h3.08v0.8zM227.75 768.2v-0.8h3.08v0.8zM230.93 768.2v-0.8h3.08v0.8zM237.31 768.2v-0.8h3.08v0.8zM240.5 768.2v-0.8h3.08v0.8zM243.69 768.2v-0.8h3.08v0.8zM250.07 768.2v-0.8h3.08v0.8zM253.25 768.2v-0.8h3.08v0.8zM256.44 768.2v-0.8h3.08v0.8zM262.82 768.2v-0.8h3.08v0.8zM266.01 768.2v-0.8h3.08v0.8zM269.2 768.2v-0.8h3.08v0.8zM275.57 768.2v-0.8h3.08v0.8zM278.76 768.2v-0.8h3.08v0.8zM281.95 768.2v-0.8h3.08v0.8zM288.33 768.2v-0.8h3.08v0.8zM291.52 768.2v-0.8h3.08v0.8zM294.71 768.2v-0.8h3.08v0.8zM297.89 768.2v-2h3.08v2zM301.08 768.2v-0.8h3.08v0.8zM304.27 768.2v-0.8h3.08v0.8zM307.46 768.2v-3h3.08v3zM310.65 768.2v-3h3.08v3zM313.84 768.2v-1.7h3.08v1.7zM317.03 768.2v-4.4h3.08v4.4zM320.21 768.2v-2h3.08v2zM323.4 768.2v-3h3.08v3zM326.59 768.2v-1.5h3.08v1.5zM329.78 768.2v-4.4h3.08v4.4zM332.97 768.2v-4.4h3.08v4.4zM336.16 768.2v-8.1h3.08v8.1zM339.35 768.2v-8.1h3.08v8.1zM342.54 768.2v-4.4h3.08v4.4zM345.72 768.2v-6h3.08v6zM348.91 768.2v-7.1h3.08v7.1zM352.1 768.2v-7.1h3.08v7.1zM355.29 768.2v-7.1h3.08v7.1zM358.48 768.2v-7.1h3.08v7.1zM361.67 768.2v-8.1h3.08v8.1zM364.86 768.2v-7.1h3.08v7.1zM368.04 768.2v-5.7h3.08v5.7zM371.23 768.2v-6.8h3.08v6.8zM374.42 768.2v-8.1h3.08v8.1zM377.61 768.2v-7.1h3.08v7.1zM380.8 768.2v-12.1h3.08v12.1zM383.99 768.2v-7.1h3.08v7.1zM387.18 768.2v-8.1h3.08v8.1zM390.36 768.2v-11.1h3.08v11.1zM393.55 768.2v-7.1h3.08v7.1zM396.74 768.2v-5.7h3.08v5.7zM399.93 768.2v-8.1h3.08v8.1zM403.12 768.2v-3h3.08v3zM406.31 768.2v-4.4h3.08v4.4zM409.5 768.2v-3h3.08v3zM412.68 768.2v-3h3.08v3zM415.87 768.2v-2h3.08v2zM419.06 768.2v-4.4h3.08v4.4zM422.25 768.2v-4.4h3.08v4.4zM425.44 768.2v-5.7h3.08v5.7zM428.63 768.2v-5.7h3.08v5.7zM431.82 768.2v-4.4h3.08v4.4zM435 768.2v-3h3.08v3zM438.19 768.2v-3h3.08v3zM441.38 768.2v-3h3.08v3zM444.57 768.2v-1.7h3.08v1.7zM447.76 768.2v-1.5h3.08v1.5zM450.95 768.2v-1.5h3.08v1.5zM454.14 768.2v-5.7h3.08v5.7zM457.32 768.2v-3.3h3.08v3.3zM460.51 768.2v-4.4h3.08v4.4zM463.7 768.2v-4.4h3.08v4.4zM466.89 768.2v-3h3.08v3zM470.08 768.2v-3h3.08v3zM473.27 768.2v-2h3.08v2zM476.46 768.2v-1h3.08v1zM479.65 768.2v-3h3.08v3zM482.83 768.2v-4.4h3.08v4.4zM486.02 768.2v-3h3.08v3zM489.21 768.2v-2h3.08v2zM492.4 768.2v-2h3.08v2zM495.59 768.2v-0.4h3.08v0.4zM498.78 768.2v-1h3.08v1zM501.97 768.2v-1.7h3.08v1.7zM505.15 768.2v-1.7h3.08v1.7zM508.34 768.2v-1.7h3.08v1.7zM511.53 768.2v-0.7h3.08v0.7zM514.72 768.2v-2h3.08v2zM517.91 768.2v-2h3.08v2zM521.1 768.2v-0.7h3.08v0.7zM524.29 768.2v-0.7h3.08v0.7zM527.47 768.2v-0.7h3.08v0.7zM530.66 768.2v-3.3h3.08v3.3zM533.85 768.2v-2h3.08v2zM537.04 768.2v-2h3.08v2zM540.23 768.2v-1h3.08v1zM543.42 768.2v-2.4h3.08v2.4zM546.61 768.2v-4.4h3.08v4.4zM549.79 768.2v-2h3.08v2zM552.98 768.2v-0.7h3.08v0.7zM556.17 768.2v-2h3.08v2zM559.36 768.2v-2h3.08v2zM562.55 768.2v-0.7h3.08v0.7zM565.74 768.2v-1.7h3.08v1.7zM568.93 768.2v-1.7h3.08v1.7zM572.11 768.2v-1.7h3.08v1.7zM575.3 768.2v-0.7h3.08v0.7zM578.49 768.2v-2h3.08v2zM581.68 768.2v-0.4h3.08v0.4zM584.87 768.2v-1.5h3.08v1.5zM588.06 768.2v-1.5h3.08v1.5zM591.25 768.2v-1.5h3.08v1.5zM594.43 768.2v-0.7h3.08v0.7zM597.62 768.2v-2h3.08v2zM600.81 768.2v-2h3.08v2zM604 768.2v-3h3.08v3zM607.19 768.2v-4.4h3.08v4.4zM610.38 768.2v-3h3.08v3zM613.57 768.2v-3h3.08v3zM616.76 768.2v-1.5h3.08v1.5zM619.94 768.2v-0.4h3.08v0.4zM623.13 768.2v-2.8h3.08v2.8zM626.32 768.2v-2.8h3.08v2.8zM629.51 768.2v-1.5h3.08v1.5zM632.7 768.2v-2.8h3.08v2.8zM635.89 768.2v-4.4h3.08v4.4zM639.08 768.2v-2.8h3.08v2.8zM642.26 768.2v-7.3h3.08v7.3zM645.45 768.2v-5.1h3.08v5.1zM648.64 768.2v-4.4h3.08v4.4zM651.83 768.2v-4.4h3.08v4.4zM655.02 768.2v-4.4h3.08v4.4zM658.21 768.2v-4.4h3.08v4.4zM661.4 768.2v-7.3h3.08v7.3zM664.58 768.2v-4.4h3.08v4.4zM667.77 768.2v-7.3h3.08v7.3zM670.96 768.2v-5.7h3.08v5.7zM674.15 768.2v-8.4h3.08v8.4zM677.34 768.2v-11.1h3.08v11.1zM680.53 768.2v-7.1h3.08v7.1zM683.72 768.2v-9.5h3.08v9.5zM686.9 768.2v-11.1h3.08v11.1zM690.09 768.2v-8.4h3.08v8.4zM693.28 768.2v-5.7h3.08v5.7zM696.47 768.2v-14.2h3.08v14.2zM699.66 768.2v-7.2h3.08v7.2zM702.85 768.2v-7.2h3.08v7.2zM706.04 768.2v-10.7h3.08v10.7zM709.22 768.2v-7.2h3.08v7.2zM712.41 768.2v-7.2h3.08v7.2zM715.6 768.2v-13h3.08v13zM718.79 768.2v-13h3.08v13zM721.98 768.2v-13h3.08v13zM725.17 768.2v-13h3.08v13zM728.36 768.2v-10.7h3.08v10.7zM731.54 768.2v-13h3.08v13zM734.73 768.2v-10.7h3.08v10.7zM737.92 768.2v-9.7h3.08v9.7zM741.11 768.2v-8.4h3.08v8.4zM744.3 768.2v-10.7h3.08v10.7zM747.49 768.2v-12.2h3.08v12.2zM750.68 768.2v-7.2h3.08v7.2zM753.86 768.2v-13h3.08v13zM757.05 768.2v-10.7h3.08v10.7zM760.24 768.2v-13h3.08v13zM763.43 768.2v-14.2h3.08v14.2zM766.62 768.2v-10.7h3.08v10.7zM769.81 768.2v-9.2h3.08v9.2zM773 768.2v-17.2h3.08v17.2zM776.19 768.2v-4.2h3.08v4.2zM779.37 768.2v-13h3.08v13zM782.56 768.2v-10.7h3.08v10.7zM785.75 768.2v-10.7h3.08v10.7zM788.94 768.2v-12.2h3.08v12.2zM792.13 768.2v-9.7h3.08v9.7zM795.32 768.2v-12.2h3.08v12.2zM798.51 768.2v-14.2h3.08v14.2zM801.69 768.2v-17.2h3.08v17.2zM804.88 768.2v-10.7h3.08v10.7zM808.07 768.2v-10.7h3.08v10.7zM811.26 768.2v-10.7h3.08v10.7zM814.45 768.2v-4.2h3.08v4.2zM817.64 768.2v-13h3.08v13zM820.83 768.2v-20.7h3.08v20.7zM824.01 768.2v-13h3.08v13zM827.2 768.2v-13h3.08v13zM830.39 768.2v-14.2h3.08v14.2zM833.58 768.2v-10.7h3.08v10.7zM836.77 768.2v-13h3.08v13zM839.96 768.2v-10.7h3.08v10.7zM843.15 768.2v-15.7h3.08v15.7zM846.33 768.2v-18.2h3.08v18.2zM849.52 768.2v-13h3.08v13zM852.71 768.2v-13h3.08v13zM855.9 768.2v-18.2h3.08v18.2zM859.09 768.2v-13h3.08v13zM862.28 768.2v-15.7h3.08v15.7zM865.47 768.2v-18.2h3.08v18.2zM868.65 768.2v-14.2h3.08v14.2zM871.84 768.2v-23.2h3.08v23.2zM875.03 768.2v-15.7h3.08v15.7zM878.22 768.2v-18.2h3.08v18.2zM881.41 768.2v-24.2h3.08v24.2zM884.6 768.2v-18.2h3.08v18.2zM887.79 768.2v-27h3.08v27zM890.97 768.2v-23.2h3.08v23.2zM894.16 768.2v-22.2h3.08v22.2zM897.35 768.2v-27h3.08v27zM900.54 768.2v-27h3.08v27zM903.73 768.2v-22.2h3.08v22.2zM906.92 768.2v-28h3.08v28zM910.11 768.2v-25.7h3.08v25.7zM913.3 768.2v-30.7h3.08v30.7zM916.48 768.2v-32h3.08v32zM919.67 768.2v-40.7h3.08v40.7zM922.86 768.2v-22.2h3.08v22.2zM926.05 768.2v-32h3.08v32zM929.24 768.2v-32h3.08v32zM932.43 768.2v-24.2h3.08v24.2zM935.62 768.2v-39.2h3.08v39.2zM938.8 768.2v-23.2h3.08v23.2zM941.99 768.2v-40.7h3.08v40.7zM945.18 768.2v-34.2h3.08v34.2zM948.37 768.2v-30.7h3.08v30.7zM951.56 768.2v-40.7h3.08v40.7zM954.75 768.2v-27h3.08v27zM957.94 768.2v-33h3.08v33zM961.12 768.2v-30.7h3.08v30.7zM964.31 768.2v-27h3.08v27zM967.5 768.2v-29.2h3.08v29.2zM970.69 768.2v-28.2h3.08v28.2zM973.88 768.2v-29.2h3.08v29.2zM977.07 768.2v-27h3.08v27zM980.26 768.2v-18.2h3.08v18.2zM983.44 768.2v-22h3.08v22zM986.63 768.2v-25.7h3.08v25.7zM989.82 768.2v-23.2h3.08v23.2zM993.01 768.2v-24.2h3.08v24.2zM996.2 768.2v-30.7h3.08v30.7zM999.39 768.2v-24.2h3.08v24.2zM1002.58 768.2v-24.2h3.08v24.2zM1005.76 768.2v-9.4h3.08v9.4zM1008.95 768.2v-17h3.08v17zM1012.14 768.2v-10.7h3.08v10.7zM1015.33 768.2v-22h3.08v22zM1018.52 768.2v-17h3.08v17zM1021.71 768.2v-14.4h3.08v14.4zM1024.9 768.2v-23.2h3.08v23.2zM1028.08 768.2v-15.7h3.08v15.7zM1031.27 768.2v-12.2h3.08v12.2zM1034.46 768.2v-14.4h3.08v14.4zM1037.65 768.2v-7h3.08v7zM1040.84 768.2v-7h3.08v7zM1044.03 768.2v-5.7h3.08v5.7zM1047.22 768.2v-9.4h3.08v9.4zM1050.41 768.2v-7h3.08v7zM1053.59 768.2v-10.7h3.08v10.7zM1056.78 768.2v-4.2h3.08v4.2zM1059.97 768.2v-10.7h3.08v10.7zM1063.16 768.2v-8.2h3.08v8.2zM1066.35 768.2v-7h3.08v7zM1069.54 768.2v-10.7h3.08v10.7zM1072.73 768.2v-7h3.08v7zM1075.91 768.2v-7h3.08v7zM1079.1 768.2v-5.7h3.08v5.7zM1082.29 768.2v-10.7h3.08v10.7zM1085.48 768.2v-15.7h3.08v15.7zM1088.67 768.2v-7h3.08v7zM1091.86 768.2v-5.7h3.08v5.7zM1095.05 768.2v-4.7h3.08v4.7zM1098.23 768.2v-8.2h3.08v8.2zM1101.42 768.2v-5.7h3.08v5.7zM1104.61 768.2v-9.2h3.08v9.2zM1107.8 768.2v-7.2h3.08v7.2zM1110.99 768.2v-7.2h3.08v7.2zM1114.18 768.2v-9.4h3.08v9.4zM1117.37 768.2v-4.7h3.08v4.7zM1120.55 768.2v-8.2h3.08v8.2zM1123.74 768.2v-2.2h3.08v2.2zM1126.93 768.2v-12.2h3.08v12.2zM1130.12 768.2v-7.2h3.08v7.2zM1133.31 768.2v-7.2h3.08v7.2zM1136.5 768.2v-7.2h3.08v7.2zM1139.69 768.2v-2.2h3.08v2.2zM1142.87 768.2v-24.2h3.08v24.2zM1146.06 768.2v-7.2h3.08v7.2zM1149.25 768.2v-13.2h3.08v13.2zM1152.44 768.2v-14.4h3.08v14.4zM1155.63 768.2v-4.7h3.08v4.7zM1158.82 768.2v-9.4h3.08v9.4zM1162.01 768.2v-18.2h3.08v18.2zM1165.19 768.2v-14.4h3.08v14.4zM1168.38 768.2v-7.2h3.08v7.2zM1171.57 768.2v-15.7h3.08v15.7zM1174.76 768.2v-22h3.08v22zM1177.95 768.2v-10.7h3.08v10.7zM1181.14 768.2v-22h3.08v22zM1184.33 768.2v-13.2h3.08v13.2zM1187.51 768.2v-18.2h3.08v18.2zM1190.7 768.2v-13.2h3.08v13.2zM1193.89 768.2v-20.7h3.08v20.7zM1197.08 768.2v-14.4h3.08v14.4zM1200.27 768.2v-27.2h3.08v27.2zM1203.46 768.2v-32.2h3.08v32.2zM1206.65 768.2v-13.2h3.08v13.2zM1209.84 768.2v-15.7h3.08v15.7zM1213.02 768.2v-27.2h3.08v27.2zM1216.21 768.2v-32.2h3.08v32.2zM1219.4 768.2v-20.7h3.08v20.7zM1222.59 768.2v-25.7h3.08v25.7zM1225.78 768.2v-44.2h3.08v44.2zM1228.97 768.2v-29.4h3.08v29.4zM1232.16 768.2v-20.7h3.08v20.7zM1235.34 768.2v-38.2h3.08v38.2zM1238.53 768.2v-43.2h3.08v43.2zM1241.72 768.2v-23.2h3.08v23.2zM1244.91 768.2v-29.4h3.08v29.4zM1248.1 768.2v-58.2h3.08v58.2zM1251.29 768.2v-40.7h3.08v40.7zM1254.48 768.2v-45.7h3.08v45.7zM1257.66 768.2v-34.4h3.08v34.4zM1260.85 768.2v-43.2h3.08v43.2zM1264.04 768.2v-40.7h3.08v40.7zM1267.23 768.2v-34.4h3.08v34.4zM1270.42 768.2v-32.2h3.08v32.2zM1273.61 768.2v-87h3.08v87zM1276.8 768.2v-55.7h3.08v55.7zM1279.98 768.2v-18.2h3.08v18.2zM1283.17 768.2v-64.4h3.08v64.4zM1286.36 768.2v-68.2h3.08v68.2zM1289.55 768.2v-68.2h3.08v68.2zM1292.74 768.2v-13.2h3.08v13.2zM1295.93 768.2v-79.2h3.08v79.2zM1299.12 768.2v-55.7h3.08v55.7zM1302.3 768.2v-27.2h3.08v27.2zM1305.49 768.2v-33.2h3.08v33.2zM1308.68 768.2v-50.7h3.08v50.7zM1311.87 768.2v-18.2h3.08v18.2zM1315.06 768.2v-62h3.08v62zM1318.25 768.2v-53h3.08v53zM1321.44 768.2v-45.7h3.08v45.7zM1324.62 768.2v-17.2h3.08v17.2zM1327.81 768.2v-44.2h3.08v44.2zM1331 768.2v-43h3.08v43zM1334.19 768.2v-43h3.08v43zM1337.38 768.2v-39.2h3.08v39.2zM1340.57 768.2v-35.7h3.08v35.7zM1343.76 768.2v-23.2h3.08v23.2zM1346.95 768.2v-18.2h3.08v18.2zM1350.13 768.2v-40.7h3.08v40.7zM1353.32 768.2v-32.2h3.08v32.2zM1356.51 768.2v-23.2h3.08v23.2zM1359.7 768.2v-24.4h3.08v24.4zM1362.89 768.2v-28.2h3.08v28.2zM1366.08 768.2v-32.2h3.08v32.2zM1369.27 768.2v-15.7h3.08v15.7zM1372.45 768.2v-0.2h3.08v0.2zM1375.64 768.2v-44.2h3.08v44.2zM1378.83 768.2v-17.2h3.08v17.2zM1382.02 768.2v-33h3.08v33zM1385.21 768.2v-23.2h3.08v23.2zM1388.4 768.2v-24.4h3.08v24.4zM1391.59 768.2v-9.4h3.08v9.4zM1394.77 768.2v-30.7h3.08v30.7zM1397.96 768.2v-18.2h3.08v18.2zM1401.15 768.2v-7h3.08v7zM1404.34 768.2v-27h3.08v27zM1407.53 768.2v-12.2h3.08v12.2zM1410.72 768.2v-17h3.08v17zM1413.91 768.2v-10.7h3.08v10.7zM1417.09 768.2v-19.2h3.08v19.2zM1420.28 768.2v-30.7h3.08v30.7zM1423.47 768.2v-23.2h3.08v23.2zM1426.66 768.2v-14.4h3.08v14.4zM1429.85 768.2v-15.7h3.08v15.7zM1433.04 768.2v-15.7h3.08v15.7zM1436.23 768.2v-12.2h3.08v12.2zM1439.41 768.2v-7h3.08v7zM1442.6 768.2v-20.7h3.08v20.7zM1445.79 768.2v-17h3.08v17zM1448.98 768.2v-15.7h3.08v15.7zM1452.17 768.2v-8.2h3.08v8.2zM1455.36 768.2v-10.7h3.08v10.7zM1458.55 768.2v-4.2h3.08v4.2zM1461.73 768.2v-8.2h3.08v8.2zM1464.92 768.2v-9.4h3.08v9.4zM1468.11 768.2v-15.7h3.08v15.7zM1471.3 768.2v-12.2h3.08v12.2zM1474.49 768.2v-28h3.08v28zM1477.68 768.2v-8.2h3.08v8.2zM1480.87 768.2v-2h3.08v2zM1487.24 768.2v-18h3.08v18zM1490.43 768.2v-10.7h3.08v10.7zM1493.62 768.2v-0.3h3.08v0.3zM1496.81 768.2v-14.2h3.08v14.2zM1500 768.2v-10.7h3.08v10.7zM1503.19 768.2v-1.2h3.08v1.2zM1506.38 768.2v-14.2h3.08v14.2zM1509.56 768.2v-7h3.08v7zM1512.75 768.2v-4.2h3.08v4.2zM1515.94 768.2v-8.2h3.08v8.2zM1519.13 768.2v-8.2h3.08v8.2zM1522.32 768.2v-12.2h3.08v12.2zM1525.51 768.2v-2h3.08v2zM1528.7 768.2v-10.7h3.08v10.7zM1531.88 768.2v-4.2h3.08v4.2zM1535.07 768.2v-7h3.08v7zM1538.26 768.2v-4.2h3.08v4.2zM1541.45 768.2v-3.2h3.08v3.2zM1544.64 768.2v-3.2h3.08v3.2zM1547.83 768.2v-2h3.08v2zM1551.02 768.2v-13h3.08v13zM1554.2 768.2v-4.2h3.08v4.2zM1557.39 768.2v-5.7h3.08v5.7zM1560.58 768.2v-4.2h3.08v4.2zM1563.77 768.2v-2h3.08v2zM1566.96 768.2v-1h3.08v1zM1570.15 768.2v-1h3.08v1zM1573.34 768.2v-4.2h3.08v4.2zM1576.52 768.2v-1.7h3.08v1.7zM1579.71 768.2v-1.7h3.08v1.7zM1582.9 768.2v-5.7h3.08v5.7zM1586.09 768.2v-1.7h3.08v1.7zM1589.28 768.2v-1.7h3.08v1.7zM1592.47 768.2v-1.7h3.08v1.7zM1595.66 768.2v-0.3h3.08v0.3zM1598.84 768.2v-3.2h3.08v3.2zM1602.03 768.2v-2h3.08v2zM1605.22 768.2v-2h3.08v2zM1608.41 768.2v-2h3.08v2zM1611.6 768.2v-4.2h3.08v4.2zM1614.79 768.2v-1.7h3.08v1.7zM1617.98 768.2v-1.7h3.08v1.7zM1621.16 768.2v-1.7h3.08v1.7zM1624.35 768.2v-1.7h3.08v1.7zM1627.54 768.2v-0.7h3.08v0.7zM1630.73 768.2v-1.7h3.08v1.7zM1633.92 768.2v-0.7h3.08v0.7zM1637.11 768.2v-1.7h3.08v1.7zM1640.3 768.2v-1.7h3.08v1.7zM1643.49 768.2v-2h3.08v2zM1646.67 768.2v-7h3.08v7zM1649.86 768.2v-2.9h3.08v2.9zM1653.05 768.2v-2.9h3.08v2.9zM1656.24 768.2v-1.8h3.08v1.8zM1659.43 768.2v-1.8h3.08v1.8zM1662.62 768.2v-1.8h3.08v1.8zM1665.81 768.2v-7h3.08v7zM1668.99 768.2v-2h3.08v2zM1672.18 768.2v-0.8h3.08v0.8zM1675.37 768.2v-0.8h3.08v0.8zM1678.56 768.2v-0.8h3.08v0.8zM1681.75 768.2v-2h3.08v2zM1684.94 768.2v-2h3.08v2zM1688.13 768.2v-4.5h3.08v4.5zM1691.31 768.2v-2h3.08v2zM1694.5 768.2v-2h3.08v2zM1697.69 768.2v-2h3.08v2zM1700.88 768.2v-2h3.08v2zM1704.07 768.2v-2h3.08v2zM1707.26 768.2v-2h3.08v2zM1710.45 768.2v-0.8h3.08v0.8zM1713.63 768.2v-0.8h3.08v0.8zM1716.82 768.2v-0.4h3.08v0.4zM1720.01 768.2v-0.4h3.08v0.4zM1723.2 768.2v-9.3h3.08v9.3zM1726.39 768.2v-0.4h3.08v0.4zM1729.58 768.2v-1.8h3.08v1.8zM1732.77 768.2v-1.8h3.08v1.8zM1735.95 768.2v-0.3h3.08v0.3zM1739.14 768.2v-0.8h3.08v0.8zM1742.33 768.2v-0.8h3.08v0.8zM1745.52 768.2v-0.3h3.08v0.3zM1748.71 768.2v-0.8h3.08v0.8zM1751.9 768.2v-0.8h3.08v0.8zM1755.09 768.2v-0.8h3.08v0.8zM1758.27 768.2v-1.8h3.08v1.8zM1761.46 768.2v-1.8h3.08v1.8zM1764.65 768.2v-0.6h3.08v0.6zM1767.84 768.2v-2h3.08v2zM1771.03 768.2v-2h3.08v2zM1774.22 768.2v-0.8h3.08v0.8zM1777.41 768.2v-0.8h3.08v0.8zM1783.78 768.2v-0.8h3.08v0.8zM1786.97 768.2v-0.8h3.08v0.8zM1793.35 768.2v-0.8h3.08v0.8zM1796.54 768.2v-0.8h3.08v0.8zM1802.92 768.2v-0.8h3.08v0.8zM1806.1 768.2v-1.8h3.08v1.8zM1809.29 768.2v-0.5h3.08v0.5zM1812.48 768.2v-2.9h3.08v2.9zM1815.67 768.2v-2.9h3.08v2.9zM1818.86 768.2v-2h3.08v2zM1822.05 768.2v-2h3.08v2zM1825.24 768.2v-2.9h3.08v2.9zM1828.42 768.2v-2h3.08v2zM1831.61 768.2v-2h3.08v2zM1834.8 768.2v-2h3.08v2zM1837.99 768.2v-2h3.08v2zM1841.18 768.2v-2h3.08v2zM1844.37 768.2v-3.1h3.08v3.1z" fill="#e8e8e8"/>
<circle cx="112.5" cy="630.4" r="11.4" fill="#fff"/><path d="M110.4 624.1v12.6M114.6 624.1v12.6" stroke="#9a9a9a" stroke-width="0.9" fill="none"/>
<circle cx="1847.5" cy="630.4" r="11.4" fill="#fff"/><path d="M1845.4 624.1v12.6M1849.6 624.1v12.6" stroke="#9a9a9a" stroke-width="0.9" fill="none"/>
<rect x="117.6" y="830.6" width="1729.9" height="19.5" fill="#333"/>
<path d="M117.6 849.6H1847.5M117.6 894.2H1847.5M117.6 939.3H1847.5" stroke="#424242" stroke-width="1" stroke-dasharray="4 3.5" fill="none"/>
<path d="M149.89 849.6V984.2M242.08 849.6V984.2M340.63 849.6V984.2M436 849.6V984.2M534.55 849.6V984.2M629.93 849.6V984.2M728.48 849.6V984.2M827.03 849.6V984.2M922.4 849.6V984.2M1020.95 849.6V984.2M1116.32 849.6V984.2M1214.87 849.6V984.2M1313.42 849.6V984.2M1402.43 849.6V984.2M1500.98 849.6V984.2M1596.36 849.6V984.2M1694.91 849.6V984.2M1790.28 849.6V984.2" stroke="#424242" stroke-width="1" stroke-dasharray="3.5 4" fill="none"/>
<path d="M117.6 849.6V984.2M110.1 984.2H1847.5M110.1 849.6H117.6M110.1 894.2H117.6M110.1 939.3H117.6M149.89 984.2v6.5M242.08 984.2v6.5M340.63 984.2v6.5M436 984.2v6.5M534.55 984.2v6.5M629.93 984.2v6.5M728.48 984.2v6.5M827.03 984.2v6.5M922.4 984.2v6.5M1020.95 984.2v6.5M1116.32 984.2v6.5M1214.87 984.2v6.5M1313.42 984.2v6.5M1402.43 984.2v6.5M1500.98 984.2v6.5M1596.36 984.2v6.5M1694.91 984.2v6.5M1790.28 984.2v6.5" stroke="#8c8c8c" stroke-width="1" fill="none"/>
<clipPath id="vclip"><rect x="110" y="840" width="1745" height="144.200"/></clipPath><path d="M118.1 983.500H1176" stroke="#3c9014" stroke-width="1" fill="none"/><path d="M1168 985L1176.6 983.7L1181 983.2L1185 982.5L1193.8 981.6L1197.5 980.3L1202.5 978.1L1206.3 976L1212.5 974.5L1216.3 973.7L1220 972.8L1225 970.6L1235 968.1L1245 966.9L1253.8 964.4L1261.3 963.1L1267.5 960L1276.3 954.4L1282.5 952.5L1290 948.5L1299.4 942.8L1306.3 941L1315 938.1L1323.8 935.4L1330 934.4L1337.5 931.9L1347.5 928.1L1355 926.5L1362.5 923.1L1370 920.3L1376.3 919L1382.5 916L1385 915L1391.3 912.8L1398.8 911.6L1405 909.4L1413.8 907.1L1420 906.5L1427.5 903.8L1435 901.3L1441.3 900.6L1447.5 898.8L1457.5 897.1L1470 896L1480 895L1492.5 894.4L1502.5 893.5L1517.5 892.8L1530 892L1542.5 891.5L1561.3 891L1580 890.6L1598.8 890.3L1620 890L1694.6 888.6L1766 888L1790 886.7L1846.3 885.4" stroke="#45e300" stroke-width="2.300" fill="none" stroke-linejoin="round" stroke-linecap="butt" clip-path="url(#vclip)"/>
<circle cx="117.6" cy="840.4" r="11.4" fill="#fff"/><path d="M115.5 834.1v12.6M119.7 834.1v12.6" stroke="#9a9a9a" stroke-width="0.9" fill="none"/>
<circle cx="1847.5" cy="840.4" r="11.4" fill="#fff"/><path d="M1845.4 834.1v12.6M1849.6 834.1v12.6" stroke="#9a9a9a" stroke-width="0.9" fill="none"/>
</svg>

<!-- ===== Windows taskbar ===== -->
<div class="a" style="left:0;top:1030px;width:1920px;height:50px;background:#031a27;"></div>
<div class="a" style="left:1000px;top:1030px;width:536px;height:50px;background:linear-gradient(90deg,#031a27,#040f22);"></div>
<div class="a" style="left:310px;top:1030px;width:61px;height:50px;background:#33434f;"></div>
<div class="a" style="left:191px;top:1077px;width:51px;height:3px;background:#76b9ed;"></div>
<div class="a" style="left:310px;top:1077px;width:61px;height:3px;background:#76b9ed;"></div>
<div class="a" style="left:1914px;top:1030px;width:1px;height:50px;background:#6d7881;"></div>
<svg style="left:0;top:1029px" width="1920" height="51" viewBox="0 1029 1920 51">
  <!-- windows logo -->
  <g fill="#fff">
    <path d="M19.700 1046.900 L28.200 1045.900 V1053.900 H19.700Z M29.200 1045.800 L40.100 1044.800 V1053.900 H29.200Z M19.700 1054.900 H28.200 V1063.900 L19.700 1062.900Z M29.200 1054.900 H40.100 V1065 L29.200 1064Z"/>
  </g>
  <!-- search -->
  <circle cx="93" cy="1052" r="7" fill="none" stroke="#fff" stroke-width="1.500"/>
  <path d="M88 1057.100 l-7.800 7.700" stroke="#fff" stroke-width="1.600"/>
  <!-- explorer folder -->
  <defs><linearGradient id="fld" x1="0" y1="0" x2="0" y2="1"><stop offset="0" stop-color="#ffe28e"/><stop offset="1" stop-color="#fbcb4a"/></linearGradient></defs>
  <path d="M140.200 1045 h27.300 v19.100 a1 1 0 0 1 -1 1 h-25.300 a1 1 0 0 1 -1 -1z" fill="url(#fld)"/>
  <path d="M140.200 1044 a1.100 1.100 0 0 1 1.100 -1.100 h9.600 a1.500 1.500 0 0 1 1.100 .500 l1.500 1.600 h14 v.300 h-13.400 l-1.600 1.100 h-12.300z" fill="#e8a317"/>
  <path d="M145 1057 a1.700 1.700 0 0 1 1.700 -1.700 h14.600 a1.700 1.700 0 0 1 1.700 1.700 v8.700 h-4.600 v-6.400 h-8.900 v6.400 h-4.500z" fill="#3b9be8"/>
  <!-- outlook -->
  <defs>
    <linearGradient id="olb" x1="0.3" y1="0" x2="0.2" y2="1"><stop offset="0" stop-color="#fde3b5"/><stop offset="0.45" stop-color="#f9c778"/><stop offset="1" stop-color="#f29a17"/></linearGradient>
    <radialGradient id="olc" cx="0.4" cy="0.3" r="0.8"><stop offset="0" stop-color="#fff0a0"/><stop offset="0.6" stop-color="#fcd23e"/><stop offset="1" stop-color="#f0a800"/></radialGradient>
    <linearGradient id="wdb" x1="0.5" y1="0" x2="0.2" y2="1"><stop offset="0" stop-color="#c3cdee"/><stop offset="0.45" stop-color="#7f97d6"/><stop offset="1" stop-color="#1f46a6"/></linearGradient>
    <linearGradient id="wdp" x1="0" y1="0" x2="1" y2="1"><stop offset="0" stop-color="#ffffff"/><stop offset="1" stop-color="#dfe6f1"/></linearGradient>
  </defs>
  <path d="M206.500 1039.700 H226.100 V1065 H200.900 V1045.300 A5.600 5.600 0 0 1 206.500 1039.700Z" fill="url(#olb)"/>
  <path d="M205 1041.300 H224.600 V1049 H205Z" fill="#fff" opacity=".35"/>
  <path d="M206.300 1045.500 L229.500 1047.300 L228.400 1063.900 L203.500 1060.900Z" fill="#fffaf0"/>
  <path d="M206.300 1045.700 L216.500 1055 L229.400 1047.600" fill="none" stroke="#e0922a" stroke-width="1.200"/>
  <path d="M203.800 1060.600 L228.300 1063.600" stroke="#f0c98a" stroke-width="1"/>
  <circle cx="216.100" cy="1057.500" r="8.300" fill="url(#olc)" stroke="#e09a10" stroke-width="1"/>
  <path d="M211 1053.900 L215.300 1058.300 L219.800 1055.800" fill="none" stroke="#d08a00" stroke-width="1.400" stroke-linecap="round" stroke-linejoin="round"/>
  <!-- word -->
  <path d="M269.500 1039.700 H287.400 V1065.200 H263 V1046.200 A6.500 6.500 0 0 1 269.500 1039.700Z" fill="url(#wdb)"/>
  <path d="M264.200 1047 C265 1043 268 1041 271 1041 H286.200 V1043 H272 C268 1044 266 1048 265.800 1056Z" fill="#e6ebfa" opacity=".5"/>
  <path d="M272.200 1043.700 L291.400 1044.600 L290.200 1068.100 L269 1064.800Z" fill="url(#wdp)"/>
  <path d="M273.600 1047.700 L275.700 1054 L278 1049.500 L279.600 1054 L282.800 1047.300" fill="none" stroke="#2244a8" stroke-width="1.500" stroke-linejoin="miter"/>
  <path d="M284.300 1048.300 l4 .2 M284.200 1051.500 l4 .2 M284 1054.700 l4 .2" stroke="#1f3f9e" stroke-width="1.300"/>
  <path d="M272.800 1057.200 l14.800 1 M272.500 1060.700 l14.800 1.200" stroke="#1f3f9e" stroke-width="1.500"/>
  <!-- firefox -->
  <defs>
    <linearGradient id="ffb" x1="0.85" y1="0.1" x2="0.25" y2="0.95">
      <stop offset="0" stop-color="#fff060"/><stop offset="0.3" stop-color="#ffbd2f"/><stop offset="0.6" stop-color="#ff6a1f"/><stop offset="0.82" stop-color="#ff3647"/><stop offset="1" stop-color="#e31587"/>
    </linearGradient>
    <linearGradient id="ffg" x1="0.6" y1="0" x2="0.4" y2="1">
      <stop offset="0" stop-color="#c437e6"/><stop offset="0.5" stop-color="#8a4df0"/><stop offset="1" stop-color="#4d3fc4"/>
    </linearGradient>
    <linearGradient id="ffh" x1="0" y1="0" x2="1" y2="1">
      <stop offset="0" stop-color="#ff9a1a"/><stop offset="1" stop-color="#ffb31f"/>
    </linearGradient>
  </defs>
  <path d="M343.700 1039.900 C345.500 1042.500 347.500 1044.300 349.300 1046.300 L350.400 1045.600 C352.800 1048.300 354 1051.800 354 1055.200 C354 1062.800 347.800 1068.700 339.900 1068.700 C332 1068.700 325.700 1062.800 325.700 1055 C325.700 1051 327.600 1047 330.700 1044.200 L331.900 1047.400 L334.500 1045.100 L335.600 1048.600 C337 1047.500 338.800 1046.900 340.400 1046.900 C340.400 1044.300 341.600 1041.600 343.700 1039.900Z" fill="url(#ffb)"/>
  <circle cx="339.800" cy="1055" r="5.900" fill="url(#ffg)"/>
  <path d="M329.700 1052.300 C331.500 1050.600 334 1050.300 336 1051 C337.800 1051.500 339 1052.300 340 1052.700 C338 1053.600 336 1053.800 334.800 1055.300 C333.800 1056.600 333.800 1058.300 334.300 1059.800 C332.300 1058.300 331.800 1055.800 332.300 1054.100 C331.300 1053.500 330.300 1053 329.700 1052.300Z" fill="url(#ffh)"/>
  <path d="M336.300 1048.200 C338.500 1047 342 1047.300 344.300 1049.200 L342.800 1050.200 C345 1052.500 345.800 1056 344 1059.300 C345.800 1054.800 343.300 1050.300 339 1049.300 C338 1049 337 1048.700 336.300 1048.200Z" fill="#c437e6" opacity=".9"/>
  <!-- tray caret -->
  <path d="M1640.500 1058.500 l7.700 -7.700 7.700 7.700" fill="none" stroke="#fff" stroke-width="1.400"/>
  <!-- globe -->
  <g fill="none" stroke="#fff" stroke-width="1.300">
    <circle cx="1678" cy="1055" r="9.300"/>
    <ellipse cx="1678" cy="1055" rx="4" ry="9.300"/>
    <path d="M1668.700 1055 h18.600 M1670.500 1050 h15 M1670.500 1060 h12"/>
  </g>
  <circle cx="1684" cy="1061" r="4.500" fill="#031a27" stroke="#fff" stroke-width="1.200"/>
  <path d="M1681 1058 l6 6" stroke="#fff" stroke-width="1.200"/>
  <!-- speaker -->
  <g fill="none" stroke="#fff" stroke-width="1.200">
    <path d="M1698.500 1051.500 h3.500 l4.500 -4 v15 l-4.500 -4 h-3.500z"/>
    <path d="M1709 1052 a4 4 0 0 1 0 6"/>
    <path d="M1711.500 1049 a8 8 0 0 1 0 12"/>
    <path d="M1714 1046 a12 12 0 0 1 0 18"/>
  </g>
  <!-- notification -->
  <path d="M1869.500 1045.500 h19 v14.500 h-7 l-2.500 2.500 -2.500 -2.500 h-7z" fill="none" stroke="#fff" stroke-width="1.300"/>
</svg>

<span class="t" id="tab1" style="top:14.44px;font-size:14.6px;line-height:14.6px;color:#f9f9fa;font-family:'Liberation Sans', sans-serif;letter-spacing:0.106px;left:38.50px;width:209px;overflow:hidden;-webkit-text-stroke:0.35px #20233e;">Вакцинироваться от COVID-19</span>
<span class="t" id="tab2" style="top:14.44px;font-size:14.6px;line-height:14.6px;color:#f9f9fa;font-family:'Liberation Sans', sans-serif;letter-spacing:0.346px;left:319.70px;width:210px;overflow:hidden;-webkit-text-stroke:0.35px #20233e;">(58) FAQ по прививкам: израиль</span>
<span class="t" id="tab3" style="top:14.44px;font-size:14.6px;line-height:14.6px;color:#f9f9fa;font-family:'Liberation Sans', sans-serif;letter-spacing:0.119px;left:600.50px;width:210px;overflow:hidden;-webkit-text-stroke:0.35px #20233e;">Зарегистрироваться - СЭД Хаб</span>
<span class="t" id="tab4" style="top:14.44px;font-size:14.6px;line-height:14.6px;color:#0c0c0d;font-family:'Liberation Sans', sans-serif;letter-spacing:0.175px;left:882.20px;width:208px;overflow:hidden;">COVID-19 Map - Johns Hopkins Coronavirus</span>
<span class="t" id="url" style="top:60.36px;font-size:16px;line-height:16px;color:#737378;font-family:'Liberation Sans', sans-serif;letter-spacing:0.734px;left:384.12px;">https://coronavirus.<span style="color:#0c0c0d">jhu.edu</span>/map.html</span>
<span class="t" id="bm1" style="top:103.44px;font-size:14.6px;line-height:14.6px;color:#0c0c0d;font-family:'Liberation Sans', sans-serif;letter-spacing:0.513px;left:39.70px;">Онкопаспорт</span>
<span class="t" id="bm2" style="top:103.44px;font-size:14.6px;line-height:14.6px;color:#0c0c0d;font-family:'Liberation Sans', sans-serif;letter-spacing:0.228px;left:1789.20px;">Другие закладки</span>
<span class="t" id="jh" style="top:174.32px;font-size:20.5px;line-height:20.5px;color:#ffffff;font-family:'Liberation Serif', serif;letter-spacing:0.247px;left:188.37px;"><span style="font-size:26.5px">J</span>OHNS <span style="font-size:26.5px">H</span>OPKINS</span>
<span class="t" id="um" style="top:199.54px;font-size:11.8px;line-height:11.8px;color:#e3e8f3;font-family:'Liberation Serif', serif;letter-spacing:0.336px;left:196.85px;">UNIVERSITY <span style="font-style:italic">&amp;</span> MEDICINE</span>
<span class="t" id="crc1" style="top:172.99px;font-size:17.5px;line-height:17.5px;color:#ffffff;font-family:'Liberation Sans', sans-serif;font-weight:700;letter-spacing:0.000px;left:386.54px;transform:scaleX(1.0447);transform-origin:0 0;-webkit-text-stroke:0.45px #fff;">CORONAVIRUS</span>
<span class="t" id="crc2" style="top:197.99px;font-size:17.5px;line-height:17.5px;color:#ffffff;font-family:'Liberation Sans', sans-serif;font-weight:700;letter-spacing:0.000px;left:386.54px;transform:scaleX(0.9898);transform-origin:0 0;-webkit-text-stroke:0.45px #fff;">RESOURCE CENTER</span>
<span class="t" id="n1" style="top:185.99px;font-size:17.5px;line-height:17.5px;color:#ffffff;font-family:'Liberation Sans', sans-serif;letter-spacing:0.240px;left:772.04px;transform:scaleX(1.1000);transform-origin:0 0;-webkit-text-stroke:0.45px #fff;">Home</span>
<span class="t" id="n2" style="top:185.99px;font-size:17.5px;line-height:17.5px;color:#ffc61e;font-family:'Liberation Sans', sans-serif;font-weight:700;letter-spacing:-0.000px;left:863.54px;transform:scaleX(1.0300);transform-origin:0 0;">Topics</span>
<span class="t" id="n3" style="top:185.99px;font-size:17.5px;line-height:17.5px;color:#ffffff;font-family:'Liberation Sans', sans-serif;letter-spacing:-0.000px;left:981.54px;transform:scaleX(1.0626);transform-origin:0 0;-webkit-text-stroke:0.45px #fff;">By Region</span>
<span class="t" id="n4" style="top:185.99px;font-size:17.5px;line-height:17.5px;color:#ffffff;font-family:'Liberation Sans', sans-serif;letter-spacing:0.000px;left:1107.54px;transform:scaleX(1.0645);transform-origin:0 0;-webkit-text-stroke:0.45px #fff;">Events &amp; News</span>
<span class="t" id="n5" style="top:185.99px;font-size:17.5px;line-height:17.5px;color:#ffffff;font-family:'Liberation Sans', sans-serif;letter-spacing:0.804px;left:1273.54px;transform:scaleX(1.1000);transform-origin:0 0;-webkit-text-stroke:0.45px #fff;">About</span>
<span class="t" id="ph" style="top:186.33px;font-size:16.5px;line-height:16.5px;color:#b3b3b3;font-family:'Liberation Sans', sans-serif;font-style:italic;letter-spacing:0.013px;left:1382.09px;">Search Data by Region...</span>
<span class="t" id="s1" style="top:281.91px;font-size:17px;line-height:17px;color:#ffffff;font-family:'Liberation Sans', sans-serif;letter-spacing:0.281px;left:190.56px;transform:scaleX(1.1000);transform-origin:0 0;-webkit-text-stroke:0.45px #fff;">Tracking Home</span>
<span class="t" id="s2" style="top:281.91px;font-size:17px;line-height:17px;color:#ffffff;font-family:'Liberation Sans', sans-serif;letter-spacing:0.182px;left:374.56px;transform:scaleX(1.1000);transform-origin:0 0;-webkit-text-stroke:0.45px #fff;">Data Visualizations</span>
<span class="t" id="s3" style="top:281.91px;font-size:17px;line-height:17px;color:#ffffff;font-family:'Liberation Sans', sans-serif;font-weight:700;letter-spacing:0.000px;left:659.77px;transform:scaleX(1.0848);transform-origin:0 0;">Global Map</span>
<span class="t" id="s4" style="top:281.91px;font-size:17px;line-height:17px;color:#ffffff;font-family:'Liberation Sans', sans-serif;letter-spacing:0.000px;left:812.07px;transform:scaleX(1.0765);transform-origin:0 0;-webkit-text-stroke:0.45px #fff;">U.S. Map</span>
<span class="t" id="s5" style="top:281.91px;font-size:17px;line-height:17px;color:#ffffff;font-family:'Liberation Sans', sans-serif;letter-spacing:0.372px;left:941.97px;transform:scaleX(1.1000);transform-origin:0 0;-webkit-text-stroke:0.45px #fff;">Data in Motion</span>
<span class="t" id="s6" style="top:281.91px;font-size:17px;line-height:17px;color:#ffffff;font-family:'Liberation Sans', sans-serif;letter-spacing:0.000px;left:1121.47px;transform:scaleX(1.0881);transform-origin:0 0;-webkit-text-stroke:0.45px #fff;">Tracking FAQ</span>
<span class="t" id="d1" style="top:336.41px;font-size:30px;line-height:30px;color:#d6d8dc;font-family:'Liberation Sans', sans-serif;letter-spacing:0.000px;left:87.85px;transform:scaleX(1.0125);transform-origin:0 0;-webkit-text-stroke:0.9px #1f366e;">COVID-19 Dashboard</span>
<span class="t" id="d2" style="top:345.21px;font-size:19.6px;line-height:19.6px;color:#ced1d7;font-family:'Liberation Sans', sans-serif;letter-spacing:0.000px;left:394.92px;transform:scaleX(1.0739);transform-origin:0 0;-webkit-text-stroke:0.45px #1f366e;">by the Center for Systems Science and Engineering (CSSE) at Johns Hopkins University (JHU)</span>
<span class="t" id="tb1" style="top:1049.35px;font-size:14px;line-height:14px;color:#ffffff;font-family:'Liberation Sans', sans-serif;letter-spacing:-0.783px;left:1731.73px;-webkit-text-stroke:0.3px #031a27;">РУС</span>
<span class="t" id="tb2" style="top:1037.25px;font-size:14px;line-height:14px;color:#ffffff;font-family:'Liberation Sans', sans-serif;letter-spacing:-0.090px;left:1796.23px;-webkit-text-stroke:0.3px #031a27;">9:41</span>
<span class="t" id="tb3" style="top:1060.25px;font-size:14px;line-height:14px;color:#ffffff;font-family:'Liberation Sans', sans-serif;letter-spacing:-0.089px;left:1775.93px;-webkit-text-stroke:0.3px #031a27;">20.07.2021</span>
<span class="t" id="x0_0" style="top:569.29px;font-size:13.6px;line-height:13.6px;color:#bdbdbd;font-family:'Liberation Sans', sans-serif;letter-spacing:0.060px;left:174.77px;">февр.</span>
<span class="t" id="x0_1" style="top:569.29px;font-size:13.6px;line-height:13.6px;color:#bdbdbd;font-family:'Liberation Sans', sans-serif;letter-spacing:0.682px;left:270.18px;">март</span>
<span class="t" id="x0_2" style="top:569.29px;font-size:13.6px;line-height:13.6px;color:#bdbdbd;font-family:'Liberation Sans', sans-serif;letter-spacing:0.562px;left:369.68px;">апр.</span>
<span class="t" id="x0_3" style="top:569.29px;font-size:13.6px;line-height:13.6px;color:#bdbdbd;font-family:'Liberation Sans', sans-serif;letter-spacing:0.576px;left:468.09px;">май</span>
<span class="t" id="x0_4" style="top:569.29px;font-size:13.6px;line-height:13.6px;color:#bdbdbd;font-family:'Liberation Sans', sans-serif;letter-spacing:0.754px;left:560.84px;">июнь</span>
<span class="t" id="x0_5" style="top:569.29px;font-size:13.6px;line-height:13.6px;color:#bdbdbd;font-family:'Liberation Sans', sans-serif;letter-spacing:0.712px;left:658.09px;">июль</span>
<span class="t" id="x0_6" style="top:569.29px;font-size:13.6px;line-height:13.6px;color:#bdbdbd;font-family:'Liberation Sans', sans-serif;letter-spacing:0.831px;left:762.09px;">авг.</span>
<span class="t" id="x0_7" style="top:569.29px;font-size:13.6px;line-height:13.6px;color:#bdbdbd;font-family:'Liberation Sans', sans-serif;letter-spacing:0.544px;left:855.24px;">сент.</span>
<span class="t" id="x0_8" style="top:569.29px;font-size:13.6px;line-height:13.6px;color:#bdbdbd;font-family:'Liberation Sans', sans-serif;letter-spacing:1.032px;left:956.14px;">окт.</span>
<span class="t" id="x0_9" style="top:569.29px;font-size:13.6px;line-height:13.6px;color:#bdbdbd;font-family:'Liberation Sans', sans-serif;letter-spacing:0.488px;left:1048.04px;">нояб.</span>
<span class="t" id="x0_10" style="top:569.29px;font-size:13.6px;line-height:13.6px;color:#bdbdbd;font-family:'Liberation Sans', sans-serif;letter-spacing:0.711px;left:1149.60px;">дек.</span>
<span class="t" id="x0_11" style="top:569.29px;font-size:13.6px;line-height:13.6px;color:#d6d6d6;font-family:'Liberation Sans', sans-serif;font-weight:700;letter-spacing:0.901px;left:1245.64px;">2021</span>
<span class="t" id="x0_12" style="top:569.29px;font-size:13.6px;line-height:13.6px;color:#bdbdbd;font-family:'Liberation Sans', sans-serif;letter-spacing:0.060px;left:1340.21px;">февр.</span>
<span class="t" id="x0_13" style="top:569.29px;font-size:13.6px;line-height:13.6px;color:#bdbdbd;font-family:'Liberation Sans', sans-serif;letter-spacing:0.682px;left:1434.02px;">март</span>
<span class="t" id="x0_14" style="top:569.29px;font-size:13.6px;line-height:13.6px;color:#bdbdbd;font-family:'Liberation Sans', sans-serif;letter-spacing:0.562px;left:1533.52px;">апр.</span>
<span class="t" id="x0_15" style="top:569.29px;font-size:13.6px;line-height:13.6px;color:#bdbdbd;font-family:'Liberation Sans', sans-serif;letter-spacing:0.576px;left:1631.93px;">май</span>
<span class="t" id="x0_16" style="top:569.29px;font-size:13.6px;line-height:13.6px;color:#bdbdbd;font-family:'Liberation Sans', sans-serif;letter-spacing:0.754px;left:1724.68px;">июнь</span>
<span class="t" id="x0_17" style="top:569.29px;font-size:13.6px;line-height:13.6px;color:#bdbdbd;font-family:'Liberation Sans', sans-serif;letter-spacing:0.712px;left:1821.93px;">июль</span>
<span class="t" id="x1_0" style="top:780.19px;font-size:13.6px;line-height:13.6px;color:#bdbdbd;font-family:'Liberation Sans', sans-serif;letter-spacing:0.060px;left:174.77px;">февр.</span>
<span class="t" id="x1_1" style="top:780.19px;font-size:13.6px;line-height:13.6px;color:#bdbdbd;font-family:'Liberation Sans', sans-serif;letter-spacing:0.682px;left:270.18px;">март</span>
<span class="t" id="x1_2" style="top:780.19px;font-size:13.6px;line-height:13.6px;color:#bdbdbd;font-family:'Liberation Sans', sans-serif;letter-spacing:0.562px;left:369.68px;">апр.</span>
<span class="t" id="x1_3" style="top:780.19px;font-size:13.6px;line-height:13.6px;color:#bdbdbd;font-family:'Liberation Sans', sans-serif;letter-spacing:0.576px;left:468.09px;">май</span>
<span class="t" id="x1_4" style="top:780.19px;font-size:13.6px;line-height:13.6px;color:#bdbdbd;font-family:'Liberation Sans', sans-serif;letter-spacing:0.754px;left:560.84px;">июнь</span>
<span class="t" id="x1_5" style="top:780.19px;font-size:13.6px;line-height:13.6px;color:#bdbdbd;font-family:'Liberation Sans', sans-serif;letter-spacing:0.712px;left:658.09px;">июль</span>
<span class="t" id="x1_6" style="top:780.19px;font-size:13.6px;line-height:13.6px;color:#bdbdbd;font-family:'Liberation Sans', sans-serif;letter-spacing:0.831px;left:762.09px;">авг.</span>
<span class="t" id="x1_7" style="top:780.19px;font-size:13.6px;line-height:13.6px;color:#bdbdbd;font-family:'Liberation Sans', sans-serif;letter-spacing:0.544px;left:855.24px;">сент.</span>
<span class="t" id="x1_8" style="top:780.19px;font-size:13.6px;line-height:13.6px;color:#bdbdbd;font-family:'Liberation Sans', sans-serif;letter-spacing:1.032px;left:956.14px;">окт.</span>
<span class="t" id="x1_9" style="top:780.19px;font-size:13.6px;line-height:13.6px;color:#bdbdbd;font-family:'Liberation Sans', sans-serif;letter-spacing:0.488px;left:1048.04px;">нояб.</span>
<span class="t" id="x1_10" style="top:780.19px;font-size:13.6px;line-height:13.6px;color:#bdbdbd;font-family:'Liberation Sans', sans-serif;letter-spacing:0.711px;left:1149.60px;">дек.</span>
<span class="t" id="x1_11" style="top:780.19px;font-size:13.6px;line-height:13.6px;color:#d6d6d6;font-family:'Liberation Sans', sans-serif;font-weight:700;letter-spacing:0.901px;left:1245.64px;">2021</span>
<span class="t" id="x1_12" style="top:780.19px;font-size:13.6px;line-height:13.6px;color:#bdbdbd;font-family:'Liberation Sans', sans-serif;letter-spacing:0.060px;left:1340.21px;">февр.</span>
<span class="t" id="x1_13" style="top:780.19px;font-size:13.6px;line-height:13.6px;color:#bdbdbd;font-family:'Liberation Sans', sans-serif;letter-spacing:0.682px;left:1434.02px;">март</span>
<span class="t" id="x1_14" style="top:780.19px;font-size:13.6px;line-height:13.6px;color:#bdbdbd;font-family:'Liberation Sans', sans-serif;letter-spacing:0.562px;left:1533.52px;">апр.</span>
<span class="t" id="x1_15" style="top:780.19px;font-size:13.6px;line-height:13.6px;color:#bdbdbd;font-family:'Liberation Sans', sans-serif;letter-spacing:0.576px;left:1631.93px;">май</span>
<span class="t" id="x1_16" style="top:780.19px;font-size:13.6px;line-height:13.6px;color:#bdbdbd;font-family:'Liberation Sans', sans-serif;letter-spacing:0.754px;left:1724.68px;">июнь</span>
<span class="t" id="x1_17" style="top:780.19px;font-size:13.6px;line-height:13.6px;color:#bdbdbd;font-family:'Liberation Sans', sans-serif;letter-spacing:0.712px;left:1821.93px;">июль</span>
<span class="t" id="x2_0" style="top:995.79px;font-size:13.6px;line-height:13.6px;color:#bdbdbd;font-family:'Liberation Sans', sans-serif;letter-spacing:0.060px;left:179.74px;">февр.</span>
<span class="t" id="x2_1" style="top:995.79px;font-size:13.6px;line-height:13.6px;color:#bdbdbd;font-family:'Liberation Sans', sans-serif;letter-spacing:0.682px;left:274.86px;">март</span>
<span class="t" id="x2_2" style="top:995.79px;font-size:13.6px;line-height:13.6px;color:#bdbdbd;font-family:'Liberation Sans', sans-serif;letter-spacing:0.562px;left:374.07px;">апр.</span>
<span class="t" id="x2_3" style="top:995.79px;font-size:13.6px;line-height:13.6px;color:#bdbdbd;font-family:'Liberation Sans', sans-serif;letter-spacing:0.576px;left:472.18px;">май</span>
<span class="t" id="x2_4" style="top:995.79px;font-size:13.6px;line-height:13.6px;color:#bdbdbd;font-family:'Liberation Sans', sans-serif;letter-spacing:0.754px;left:564.64px;">июнь</span>
<span class="t" id="x2_5" style="top:995.79px;font-size:13.6px;line-height:13.6px;color:#bdbdbd;font-family:'Liberation Sans', sans-serif;letter-spacing:0.712px;left:661.60px;">июль</span>
<span class="t" id="x2_6" style="top:995.79px;font-size:13.6px;line-height:13.6px;color:#bdbdbd;font-family:'Liberation Sans', sans-serif;letter-spacing:0.831px;left:765.30px;">авг.</span>
<span class="t" id="x2_7" style="top:995.79px;font-size:13.6px;line-height:13.6px;color:#bdbdbd;font-family:'Liberation Sans', sans-serif;letter-spacing:0.544px;left:858.16px;">сент.</span>
<span class="t" id="x2_8" style="top:995.79px;font-size:13.6px;line-height:13.6px;color:#bdbdbd;font-family:'Liberation Sans', sans-serif;letter-spacing:1.032px;left:958.78px;">окт.</span>
<span class="t" id="x2_9" style="top:995.79px;font-size:13.6px;line-height:13.6px;color:#bdbdbd;font-family:'Liberation Sans', sans-serif;letter-spacing:0.488px;left:1050.39px;">нояб.</span>
<span class="t" id="x2_10" style="top:995.79px;font-size:13.6px;line-height:13.6px;color:#bdbdbd;font-family:'Liberation Sans', sans-serif;letter-spacing:0.711px;left:1151.65px;">дек.</span>
<span class="t" id="x2_11" style="top:995.79px;font-size:13.6px;line-height:13.6px;color:#d6d6d6;font-family:'Liberation Sans', sans-serif;font-weight:700;letter-spacing:0.901px;left:1247.40px;">2021</span>
<span class="t" id="x2_12" style="top:995.79px;font-size:13.6px;line-height:13.6px;color:#bdbdbd;font-family:'Liberation Sans', sans-serif;letter-spacing:0.060px;left:1341.68px;">февр.</span>
<span class="t" id="x2_13" style="top:995.79px;font-size:13.6px;line-height:13.6px;color:#bdbdbd;font-family:'Liberation Sans', sans-serif;letter-spacing:0.682px;left:1435.21px;">март</span>
<span class="t" id="x2_14" style="top:995.79px;font-size:13.6px;line-height:13.6px;color:#bdbdbd;font-family:'Liberation Sans', sans-serif;letter-spacing:0.562px;left:1534.42px;">апр.</span>
<span class="t" id="x2_15" style="top:995.79px;font-size:13.6px;line-height:13.6px;color:#bdbdbd;font-family:'Liberation Sans', sans-serif;letter-spacing:0.576px;left:1632.53px;">май</span>
<span class="t" id="x2_16" style="top:995.79px;font-size:13.6px;line-height:13.6px;color:#bdbdbd;font-family:'Liberation Sans', sans-serif;letter-spacing:0.754px;left:1724.99px;">июнь</span>
<span class="t" id="x2_17" style="top:995.79px;font-size:13.6px;line-height:13.6px;color:#bdbdbd;font-family:'Liberation Sans', sans-serif;letter-spacing:0.712px;left:1821.95px;">июль</span>
<span class="t" id="y0_0" style="top:432.12px;font-size:13.8px;line-height:13.8px;color:#bdbdbd;font-family:'Liberation Sans', sans-serif;letter-spacing:0.358px;left:74.14px;">15k</span>
<span class="t" id="y0_1" style="top:471.82px;font-size:13.8px;line-height:13.8px;color:#bdbdbd;font-family:'Liberation Sans', sans-serif;letter-spacing:0.358px;left:74.14px;">10k</span>
<span class="t" id="y0_2" style="top:511.72px;font-size:13.8px;line-height:13.8px;color:#bdbdbd;font-family:'Liberation Sans', sans-serif;letter-spacing:0.788px;left:81.74px;">5k</span>
<span class="t" id="y0_3" style="top:551.62px;font-size:13.8px;line-height:13.8px;color:#bdbdbd;font-family:'Liberation Sans', sans-serif;letter-spacing:0.679px;left:88.74px;">0</span>
<span class="t" id="y1_0" style="top:634.02px;font-size:13.8px;line-height:13.8px;color:#bdbdbd;font-family:'Liberation Sans', sans-serif;letter-spacing:0.617px;left:72.84px;">150</span>
<span class="t" id="y1_1" style="top:676.22px;font-size:13.8px;line-height:13.8px;color:#bdbdbd;font-family:'Liberation Sans', sans-serif;letter-spacing:0.617px;left:72.84px;">100</span>
<span class="t" id="y1_2" style="top:719.92px;font-size:13.8px;line-height:13.8px;color:#bdbdbd;font-family:'Liberation Sans', sans-serif;letter-spacing:1.107px;left:80.64px;">50</span>
<span class="t" id="y1_3" style="top:762.62px;font-size:13.8px;line-height:13.8px;color:#bdbdbd;font-family:'Liberation Sans', sans-serif;letter-spacing:0.679px;left:88.74px;">0</span>
<span class="t" id="y2_0" style="top:844.02px;font-size:13.8px;line-height:13.8px;color:#bdbdbd;font-family:'Liberation Sans', sans-serif;letter-spacing:0.261px;left:74.14px;">15M</span>
<span class="t" id="y2_1" style="top:888.62px;font-size:13.8px;line-height:13.8px;color:#bdbdbd;font-family:'Liberation Sans', sans-serif;letter-spacing:0.261px;left:74.14px;">10M</span>
<span class="t" id="y2_2" style="top:933.72px;font-size:13.8px;line-height:13.8px;color:#bdbdbd;font-family:'Liberation Sans', sans-serif;letter-spacing:0.694px;left:81.64px;">5M</span>
<span class="t" id="y2_3" style="top:978.62px;font-size:13.8px;line-height:13.8px;color:#bdbdbd;font-family:'Liberation Sans', sans-serif;letter-spacing:0.679px;left:93.14px;">0</span>
<span class="t" id="yt0" style="left:55.40px;top:496.60px;font-size:14px;line-height:14px;color:#d8d8d8;font-weight:700;letter-spacing:0.117px;transform:translate(-50%,-50%) rotate(-90deg);-webkit-text-stroke:0.2px #222;">Daily Cases</span>
<span class="t" id="yt1" style="left:55.40px;top:703.80px;font-size:14px;line-height:14px;color:#d8d8d8;font-weight:700;letter-spacing:0.285px;transform:translate(-50%,-50%) rotate(-90deg);-webkit-text-stroke:0.2px #222;">Daily Deaths</span>
<span class="t" id="yt2" style="left:55.40px;top:916.50px;font-size:14px;line-height:14px;color:#d8d8d8;font-weight:700;letter-spacing:0.201px;transform:translate(-50%,-50%) rotate(-90deg);-webkit-text-stroke:0.2px #222;">Total Vaccine Doses</span>
</div>
</body></html>
